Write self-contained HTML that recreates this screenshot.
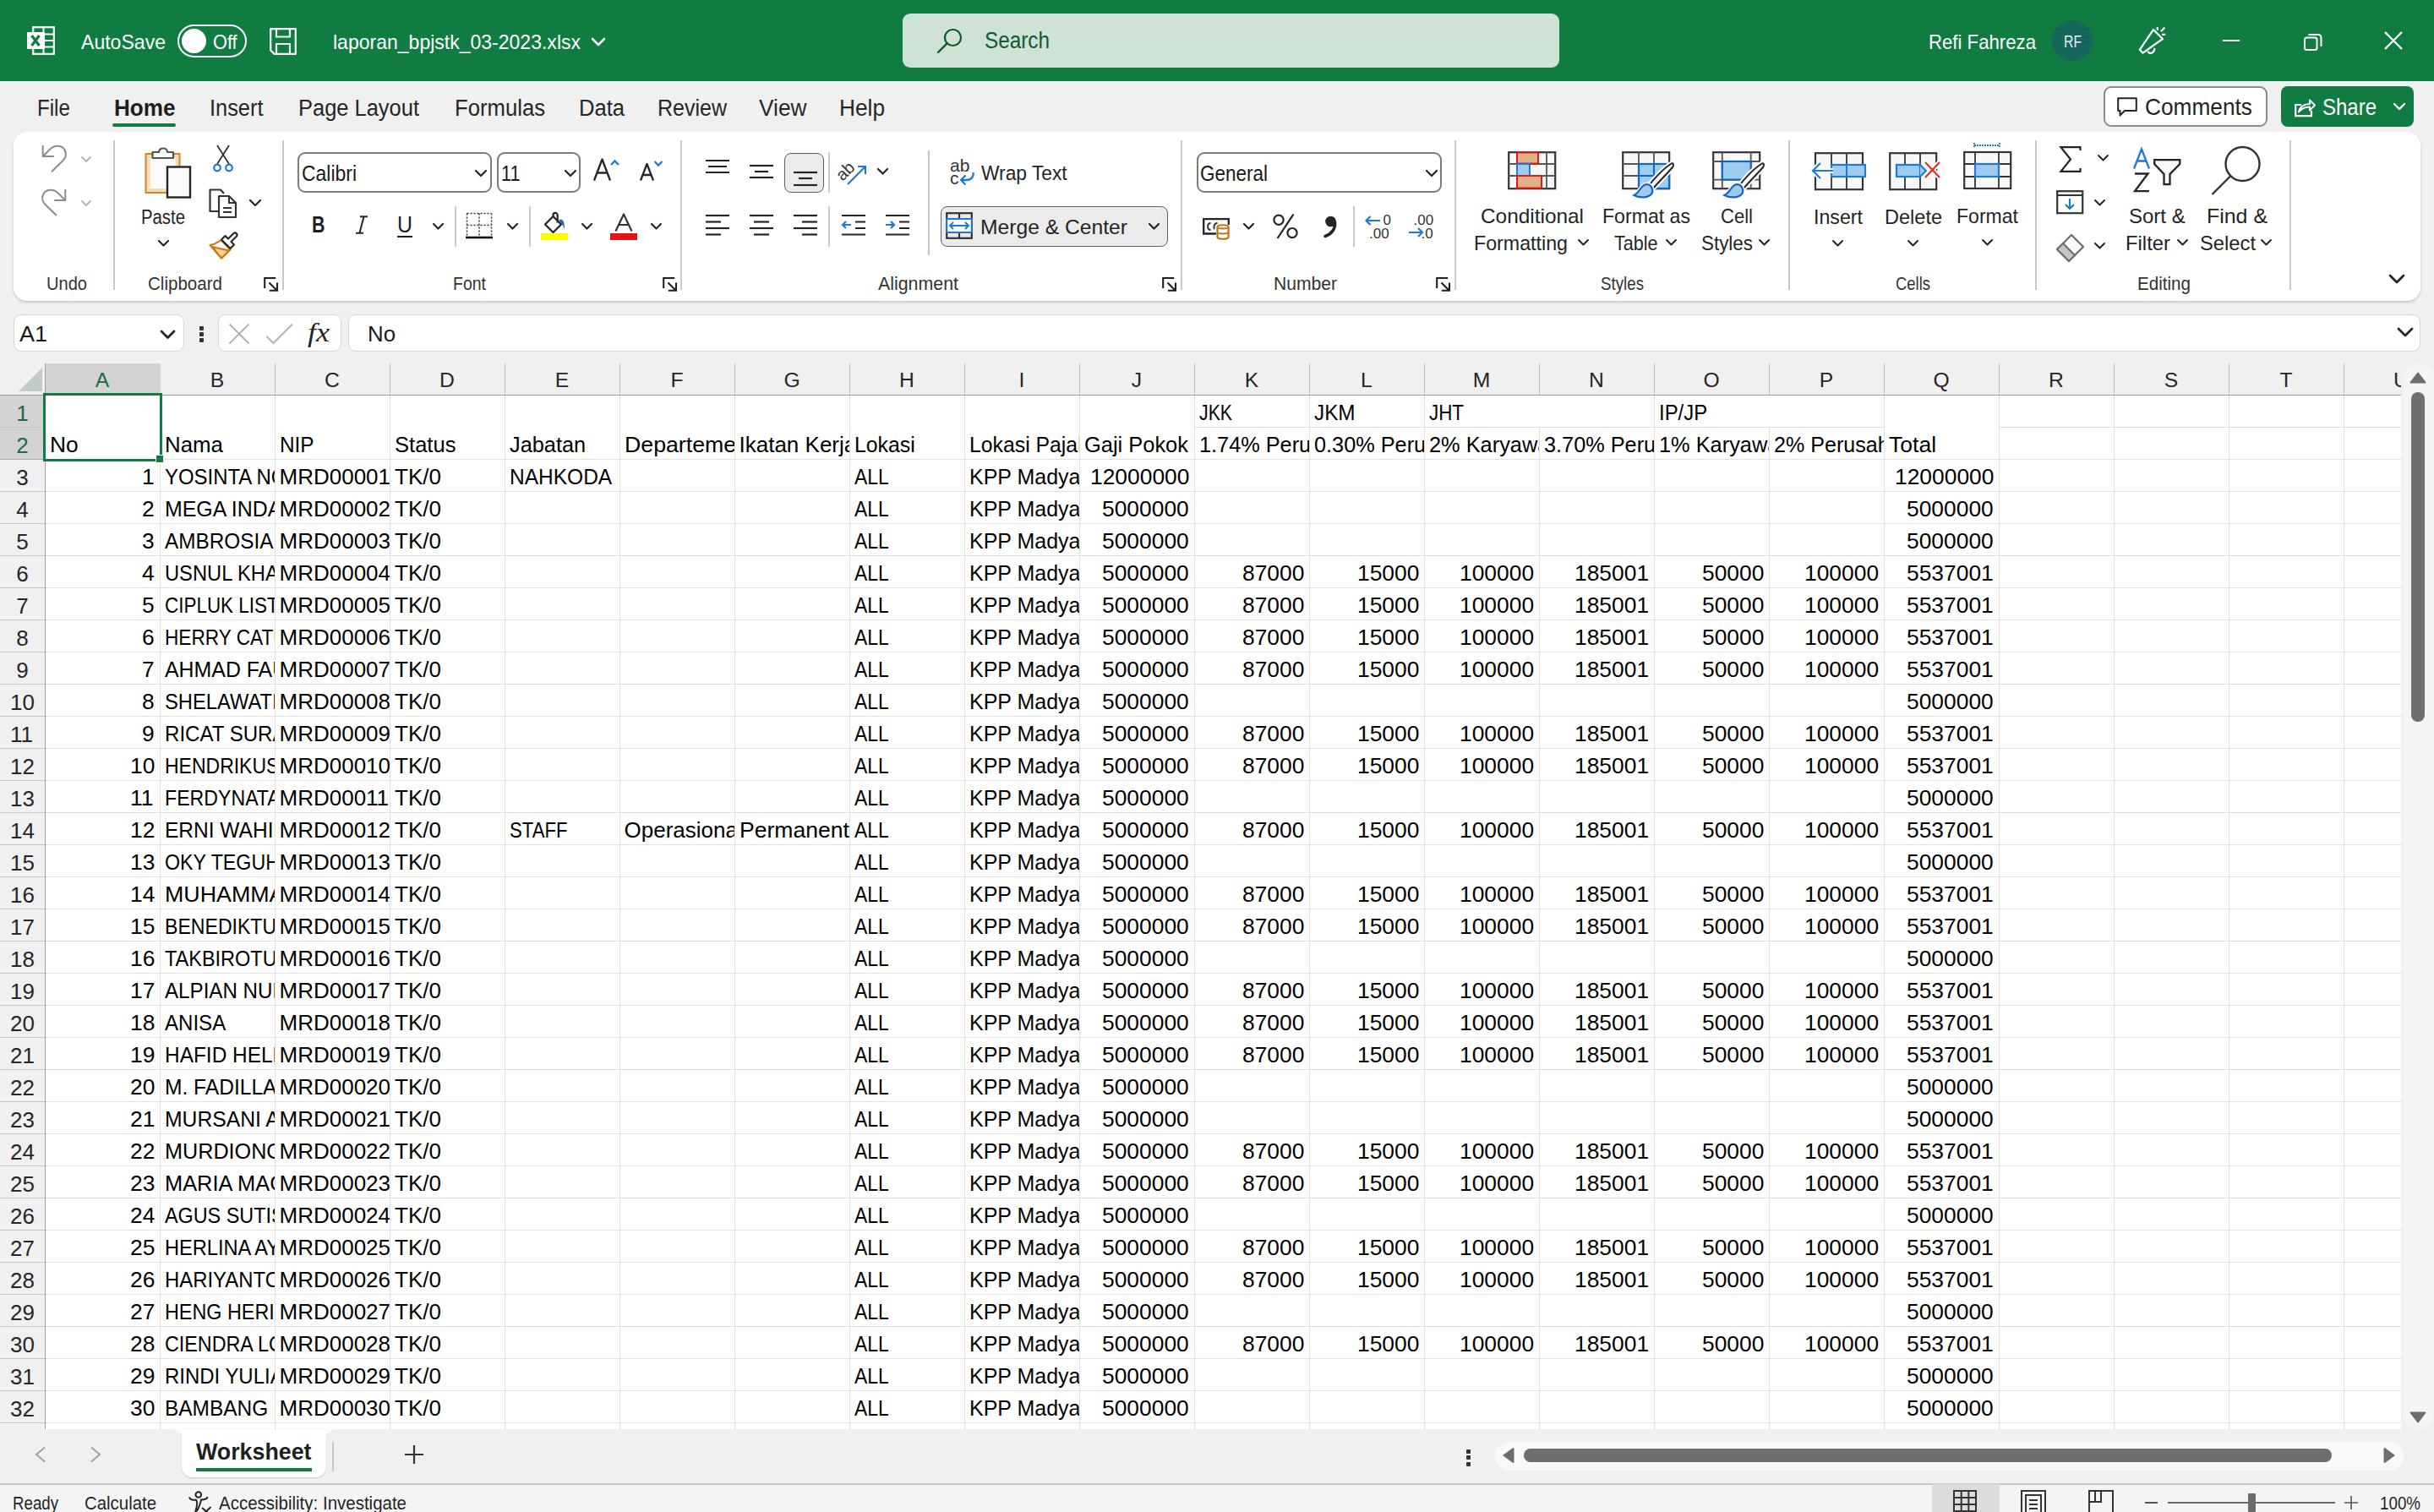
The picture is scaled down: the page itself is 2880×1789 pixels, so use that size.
<!DOCTYPE html><html><head><meta charset="utf-8"><style>
html,body{margin:0;padding:0}
body{width:2880px;height:1789px;overflow:hidden;position:relative;background:#f0f0f0;font-family:"Liberation Sans",sans-serif}
.t{position:absolute;white-space:nowrap;line-height:normal;transform-origin:0 0}
.r{position:absolute;box-sizing:border-box}
svg.r{overflow:visible}
</style></head><body>

<div class="r" style="left:0px;top:0px;width:2880px;height:96px;background:#107c41"></div>
<svg class="r" style="left:31px;top:31px;" width="34" height="34" viewBox="0 0 34 34" fill="none"><rect x="8.2" y="1.2" width="24.6" height="31.6" stroke="#fff" stroke-width="2.2"/>
<path d="M8 9.5H33M8 17H33M8 24.5H33M20.5 1V33" stroke="#fff" stroke-width="2"/>
<rect x="1" y="7" width="21" height="20" fill="#fff"/>
<path d="M6.5 11L15.5 23M15.5 11L6.5 23" stroke="#107c41" stroke-width="3.2"/></svg>
<div class="t" style="left:96.0px;top:35.9px;font-size:24px;color:#fff;transform:scaleX(0.9609);">AutoSave</div>
<div class="r" style="left:210px;top:29px;width:82px;height:39px;border:2.2px solid #fff;border-radius:20px"></div>
<div class="r" style="left:215px;top:34px;width:29px;height:29px;background:#fff;border-radius:50%"></div>
<div class="t" style="left:252.0px;top:35.9px;font-size:24px;color:#fff;transform:scaleX(0.9061);">Off</div>
<svg class="r" style="left:319px;top:33px;" width="32" height="32" viewBox="0 0 32 32" fill="none"><path d="M1.2 1.2H30.8V30.8H5.5L1.2 26.5Z" stroke="#fff" stroke-width="2.2" stroke-linejoin="round"/>
<path d="M8 1.5V10.5H24V1.5" stroke="#fff" stroke-width="2.2"/>
<path d="M8 30.5V19H24V30.5" stroke="#fff" stroke-width="2.2"/></svg>
<div class="t" style="left:394.0px;top:35.9px;font-size:24px;color:#fff;transform:scaleX(0.9590);">laporan_bpjstk_03-2023.xlsx</div>
<svg class="r" style="left:699.0px;top:43.5px;" width="18" height="11.0" viewBox="0 0 18 11.0" fill="none"><path d="M2 2 L9.0 9.0 L16 2" stroke="#fff" stroke-width="2.6" stroke-linecap="round" stroke-linejoin="round"/></svg>
<div class="r" style="left:1068px;top:16px;width:777px;height:64px;background:#cfe2d6;border-radius:9px"></div>
<svg class="r" style="left:1108px;top:32px;" width="32" height="32" viewBox="0 0 32 32" fill="none"><circle cx="19.5" cy="12.5" r="9.5" stroke="#0f5a30" stroke-width="2.2"/>
<path d="M12.8 19.2L2 30" stroke="#0f5a30" stroke-width="2.4" stroke-linecap="round"/></svg>
<div class="t" style="left:1165.0px;top:33.1px;font-size:27px;color:#0f5a30;transform:scaleX(0.9001);">Search</div>
<div class="t" style="left:2282.0px;top:35.9px;font-size:24px;color:#fff;transform:scaleX(0.9244);">Refi Fahreza</div>
<div class="r" style="left:2428px;top:24px;width:48px;height:48px;background:radial-gradient(circle at 2px 2px,#1d4c9c 0.9px,rgba(0,0,0,0) 1.3px) 0 0/4.5px 4.5px,#146c4c;border-radius:50%"></div>
<div class="t" style="left:2441.5px;top:37.6px;font-size:20px;color:#e8eef2;transform:scaleX(0.7877);">RF</div>
<svg class="r" style="left:2527px;top:30px;" width="38" height="36" viewBox="0 0 38 36" fill="none"><path d="M4.8 28.8L20.9 5.1L32 16L8.4 32.7Z" stroke="#fff" stroke-width="2.2" stroke-linejoin="round"/>
<path d="M14.5 30.5C15 34 21.5 34.5 22.5 27" stroke="#fff" stroke-width="2.2"/>
<path d="M25.8 2V5.8M29.8 7.2L34.4 2.6M31 10.9H35.2" stroke="#fff" stroke-width="2.2"/></svg>
<div class="r" style="left:2630px;top:47px;width:20px;height:2px;background:#fff"></div>
<svg class="r" style="left:2726px;top:39px;" width="22" height="21" viewBox="0 0 22 21" fill="none"><rect x="1" y="5.5" width="14.5" height="14.5" rx="2.5" stroke="#fff" stroke-width="2"/>
<path d="M5.5 2H17A3.5 3.5 0 0 1 20.5 5.5V16" stroke="#fff" stroke-width="2"/></svg>
<svg class="r" style="left:2821px;top:37px;" width="22" height="22" viewBox="0 0 22 22" fill="none"><path d="M1 1L21 21M21 1L1 21" stroke="#fff" stroke-width="2.2"/></svg>
<div class="t" style="left:43.6px;top:113.1px;font-size:27px;color:#262626;transform:scaleX(0.8918);">File</div>
<div class="t" style="left:134.5px;top:113.1px;font-size:27px;color:#1f1f1f;font-weight:700;transform:scaleX(0.9678);">Home</div>
<div class="t" style="left:247.5px;top:113.1px;font-size:27px;color:#262626;transform:scaleX(0.9404);">Insert</div>
<div class="t" style="left:353.0px;top:113.1px;font-size:27px;color:#262626;transform:scaleX(0.9431);">Page Layout</div>
<div class="t" style="left:538.0px;top:113.1px;font-size:27px;color:#262626;transform:scaleX(0.9509);">Formulas</div>
<div class="t" style="left:685.0px;top:113.1px;font-size:27px;color:#262626;transform:scaleX(0.9468);">Data</div>
<div class="t" style="left:778.0px;top:113.1px;font-size:27px;color:#262626;transform:scaleX(0.9263);">Review</div>
<div class="t" style="left:898.0px;top:113.1px;font-size:27px;color:#262626;transform:scaleX(0.9740);">View</div>
<div class="t" style="left:993.0px;top:113.1px;font-size:27px;color:#262626;transform:scaleX(0.9725);">Help</div>
<div class="r" style="left:133px;top:146px;width:75px;height:4px;background:#107c41;border-radius:2px"></div>
<div class="r" style="left:2489px;top:102px;width:194px;height:48px;border:2px solid #8a8a8a;border-radius:9px;background:#fff"></div>
<svg class="r" style="left:2505px;top:115px;" width="24" height="24" viewBox="0 0 24 24" fill="none"><path d="M1.2 1.2H22.8V16H9L3.5 21.5V16H1.2Z" stroke="#242424" stroke-width="2" stroke-linejoin="round"/></svg>
<div class="t" style="left:2538.0px;top:111.2px;font-size:28px;color:#242424;transform:scaleX(0.9382);">Comments</div>
<div class="r" style="left:2699px;top:102px;width:157px;height:48px;background:#107c41;border-radius:8px"></div>
<svg class="r" style="left:2714px;top:113px;" width="28" height="28" viewBox="0 0 28 28" fill="none"><path d="M9 11H2.2V24.2H21V18" stroke="#fff" stroke-width="2.2"/>
<path d="M6 19.5C7 13.5 12 10 19 10V5.5L25 11.5L19 17.5V13.5C13 13.5 9 15.5 6 19.5Z" stroke="#fff" stroke-width="2" stroke-linejoin="round"/></svg>
<div class="t" style="left:2748.0px;top:111.2px;font-size:28px;color:#fff;transform:scaleX(0.8566);">Share</div>
<svg class="r" style="left:2831.0px;top:121.0px;" width="16" height="10.0" viewBox="0 0 16 10.0" fill="none"><path d="M2 2 L8.0 8.0 L14 2" stroke="#fff" stroke-width="2.4" stroke-linecap="round" stroke-linejoin="round"/></svg>
<div class="r" style="left:16px;top:156px;width:2848px;height:200px;background:#fff;border-radius:16px;box-shadow:0 2px 3px rgba(0,0,0,0.17)"></div>
<div class="r" style="left:134px;top:166px;width:2px;height:177px;background:#c9c9c9"></div>
<div class="r" style="left:334px;top:166px;width:2px;height:177px;background:#c9c9c9"></div>
<div class="r" style="left:805px;top:166px;width:2px;height:177px;background:#c9c9c9"></div>
<div class="r" style="left:1397px;top:166px;width:2px;height:177px;background:#c9c9c9"></div>
<div class="r" style="left:1721px;top:166px;width:2px;height:177px;background:#c9c9c9"></div>
<div class="r" style="left:2116px;top:166px;width:2px;height:177px;background:#c9c9c9"></div>
<div class="r" style="left:2408px;top:166px;width:2px;height:177px;background:#c9c9c9"></div>
<div class="r" style="left:2709px;top:166px;width:2px;height:177px;background:#c9c9c9"></div>
<div class="r" style="left:538px;top:244px;width:2px;height:48px;background:#c9c9c9"></div>
<div class="r" style="left:626px;top:244px;width:2px;height:48px;background:#c9c9c9"></div>
<div class="r" style="left:980px;top:180px;width:2px;height:48px;background:#c9c9c9"></div>
<div class="r" style="left:980px;top:244px;width:2px;height:48px;background:#c9c9c9"></div>
<div class="r" style="left:1601px;top:244px;width:2px;height:48px;background:#c9c9c9"></div>
<div class="r" style="left:1098px;top:178px;width:2px;height:124px;background:#c9c9c9"></div>
<div class="t" style="left:55.0px;top:324.2px;font-size:21.5px;color:#333;transform:scaleX(0.9339);">Undo</div>
<div class="t" style="left:175.0px;top:324.2px;font-size:21.5px;color:#333;transform:scaleX(0.9563);">Clipboard</div>
<div class="t" style="left:536.0px;top:324.2px;font-size:21.5px;color:#333;transform:scaleX(0.9065);">Font</div>
<div class="t" style="left:1039.0px;top:324.2px;font-size:21.5px;color:#333;transform:scaleX(0.9937);">Alignment</div>
<div class="t" style="left:1507.0px;top:324.2px;font-size:21.5px;color:#333;transform:scaleX(0.9808);">Number</div>
<div class="t" style="left:1894.0px;top:324.2px;font-size:21.5px;color:#333;transform:scaleX(0.8711);">Styles</div>
<div class="t" style="left:2243.0px;top:324.2px;font-size:21.5px;color:#333;transform:scaleX(0.8580);">Cells</div>
<div class="t" style="left:2529.0px;top:324.2px;font-size:21.5px;color:#333;transform:scaleX(0.9583);">Editing</div>
<svg class="r" style="left:312px;top:327px;" width="18" height="18" viewBox="0 0 18 18" fill="none"><path d="M1.2 14V2H14.2M6.5 7.5L15.5 16.5M16 7.5V16.8H6.8" stroke="#1f1f1f" stroke-width="2.1"/></svg>
<svg class="r" style="left:784px;top:327px;" width="18" height="18" viewBox="0 0 18 18" fill="none"><path d="M1.2 14V2H14.2M6.5 7.5L15.5 16.5M16 7.5V16.8H6.8" stroke="#1f1f1f" stroke-width="2.1"/></svg>
<svg class="r" style="left:1375px;top:327px;" width="18" height="18" viewBox="0 0 18 18" fill="none"><path d="M1.2 14V2H14.2M6.5 7.5L15.5 16.5M16 7.5V16.8H6.8" stroke="#1f1f1f" stroke-width="2.1"/></svg>
<svg class="r" style="left:1699px;top:327px;" width="18" height="18" viewBox="0 0 18 18" fill="none"><path d="M1.2 14V2H14.2M6.5 7.5L15.5 16.5M16 7.5V16.8H6.8" stroke="#1f1f1f" stroke-width="2.1"/></svg>
<svg class="r" style="left:48px;top:171px;" width="32" height="34" viewBox="0 0 32 34" fill="none"><path d="M2.7 1V14.1H15.8" stroke="#8c8c8c" stroke-width="2"/><path d="M3.5 13.3L11 5.8C17 0 26 0.5 29 7.5C31 12 29 16.5 26 19.5L13 32.3" stroke="#8c8c8c" stroke-width="2"/></svg>
<svg class="r" style="left:48px;top:223px;" width="32" height="34" viewBox="0 0 32 34" fill="none"><path d="M29.3 1V14.1H16.2" stroke="#8c8c8c" stroke-width="2"/><path d="M28.5 13.3L21 5.8C15 0 6 0.5 3 7.5C1 12 3 16.5 6 19.5L19 32" stroke="#8c8c8c" stroke-width="2"/></svg>
<svg class="r" style="left:95.0px;top:183.5px;" width="14" height="9.0" viewBox="0 0 14 9.0" fill="none"><path d="M2 2 L7.0 7.0 L12 2" stroke="#b4b4b4" stroke-width="2" stroke-linecap="round" stroke-linejoin="round"/></svg>
<svg class="r" style="left:95.0px;top:235.5px;" width="14" height="9.0" viewBox="0 0 14 9.0" fill="none"><path d="M2 2 L7.0 7.0 L12 2" stroke="#b4b4b4" stroke-width="2" stroke-linecap="round" stroke-linejoin="round"/></svg>
<svg class="r" style="left:171px;top:173px;" width="56" height="63" viewBox="0 0 56 63" fill="none"><rect x="1.5" y="9" width="40" height="46" fill="#f6dcb5" stroke="#d9822b" stroke-width="2"/>
<rect x="6.5" y="14" width="30" height="36" fill="#fbfbfb"/>
<path d="M9.5 14V7H17C17 1 27 1 27 7H34V14Z" fill="#fbfbfb" stroke="#555" stroke-width="2.2" stroke-linejoin="round"/>
<rect x="27" y="24.5" width="27" height="36" fill="#fbfbfb" stroke="#242424" stroke-width="2.4"/></svg>
<div class="t" style="left:167.0px;top:244.0px;font-size:23.3px;color:#242424;transform:scaleX(0.8728);">Paste</div>
<svg class="r" style="left:185.5px;top:283.25px;" width="15" height="9.5" viewBox="0 0 15 9.5" fill="none"><path d="M2 2 L7.5 7.5 L13 2" stroke="#242424" stroke-width="2.2" stroke-linecap="round" stroke-linejoin="round"/></svg>
<svg class="r" style="left:252px;top:171px;" width="24" height="34" viewBox="0 0 24 34" fill="none"><path d="M5 23L19 1M19 23L5 1" stroke="#333" stroke-width="1.8"/>
<circle cx="5" cy="27.5" r="3.8" stroke="#1f7ad2" stroke-width="2.2" fill="#fff"/><circle cx="19" cy="27.5" r="3.8" stroke="#1f7ad2" stroke-width="2.2" fill="#fff"/></svg>
<svg class="r" style="left:247px;top:223px;" width="36" height="36" viewBox="0 0 36 36" fill="none"><path d="M12 27H1.5V1.5H14L18 6" stroke="#333" stroke-width="2.2" stroke-linejoin="round"/>
<path d="M12 9H24L32 17V34H12Z" fill="#fff" stroke="#333" stroke-width="2.2" stroke-linejoin="round"/>
<path d="M24 9V17H32M17 23H27M17 28H27" stroke="#333" stroke-width="2"/></svg>
<svg class="r" style="left:294.0px;top:235.0px;" width="16" height="10.0" viewBox="0 0 16 10.0" fill="none"><path d="M2 2 L8.0 8.0 L14 2" stroke="#242424" stroke-width="2.2" stroke-linecap="round" stroke-linejoin="round"/></svg>
<svg class="r" style="left:247px;top:275px;" width="36" height="34" viewBox="0 0 36 34" fill="none"><path d="M14.5 9C10 13 6 14 1.5 15L15 30.5L25.5 20.5Z" fill="#fafafa" stroke="#d0740c" stroke-width="2" stroke-linejoin="round"/>
<path d="M4 17L15 30.5L24 21.5Z" fill="#fdd39a" stroke="#d0740c" stroke-width="2" stroke-linejoin="round"/>
<path d="M15 8.5L19.5 4L23 7.5L29.5 1A2.5 2.5 0 0 1 33 4.5L26.5 11L30 14.5L25.5 19Z" fill="#fafafa" stroke="#242424" stroke-width="2.1" stroke-linejoin="round"/></svg>
<div class="r" style="left:352px;top:180px;width:230px;height:48px;border:2px solid #7c7c7c;border-radius:9px"></div>
<div class="t" style="left:357.0px;top:191.1px;font-size:25.5px;color:#1a1a1a;transform:scaleX(0.8994);">Calibri</div>
<svg class="r" style="left:561.0px;top:200.0px;" width="16" height="10.0" viewBox="0 0 16 10.0" fill="none"><path d="M2 2 L8.0 8.0 L14 2" stroke="#242424" stroke-width="2.2" stroke-linecap="round" stroke-linejoin="round"/></svg>
<div class="r" style="left:588px;top:180px;width:99px;height:48px;border:2px solid #7c7c7c;border-radius:9px"></div>
<div class="t" style="left:593.0px;top:191.1px;font-size:25.5px;color:#1a1a1a;transform:scaleX(0.8461);">11</div>
<svg class="r" style="left:667.0px;top:200.0px;" width="16" height="10.0" viewBox="0 0 16 10.0" fill="none"><path d="M2 2 L8.0 8.0 L14 2" stroke="#242424" stroke-width="2.2" stroke-linecap="round" stroke-linejoin="round"/></svg>
<svg class="r" style="left:700px;top:186px;" width="34" height="30" viewBox="0 0 34 30" fill="none"><path d="M3 27.5L12.5 2.5L22 27.5M6.8 18.5H18.2" stroke="#242424" stroke-width="2.3" stroke-linejoin="round"/><path d="M23 9L27.5 4.5L32 9" stroke="#1f7ad2" stroke-width="2.3"/></svg>
<svg class="r" style="left:755px;top:186px;" width="32" height="30" viewBox="0 0 32 30" fill="none"><path d="M3 27.5L10.5 8L18 27.5M5.8 21H15.2" stroke="#242424" stroke-width="2.3" stroke-linejoin="round"/><path d="M19.5 5L24 9.5L28.5 5" stroke="#1f7ad2" stroke-width="2.3"/></svg>
<div class="t" style="left:369.0px;top:251.1px;font-size:27px;color:#1f1f1f;font-weight:700;transform:scaleX(0.7949);">B</div>
<svg class="r" style="left:419px;top:255px;" width="18" height="22" viewBox="0 0 18 22" fill="none"><path d="M11.5 1.5L6.5 20.5M7 1.2H16M2 20.8H11" stroke="#242424" stroke-width="2"/></svg>
<div class="t" style="left:470.0px;top:251.1px;font-size:27px;color:#1f1f1f;transform:scaleX(0.9231);">U</div>
<div class="r" style="left:470px;top:279px;width:18px;height:2px;background:#1f1f1f"></div>
<svg class="r" style="left:510.5px;top:263.25px;" width="15" height="9.5" viewBox="0 0 15 9.5" fill="none"><path d="M2 2 L7.5 7.5 L13 2" stroke="#242424" stroke-width="2.2" stroke-linecap="round" stroke-linejoin="round"/></svg>
<svg class="r" style="left:551px;top:251px;" width="32" height="32" viewBox="0 0 32 32" fill="none"><path d="M1.5 1.5H30.5M1.5 15.5H30.5M1.5 1.5V29M30.5 1.5V29M16 1.5V29" stroke="#333" stroke-width="1.5" stroke-dasharray="2 2"/><path d="M0 30H32" stroke="#111" stroke-width="2.6"/></svg>
<svg class="r" style="left:598.5px;top:263.25px;" width="15" height="9.5" viewBox="0 0 15 9.5" fill="none"><path d="M2 2 L7.5 7.5 L13 2" stroke="#242424" stroke-width="2.2" stroke-linecap="round" stroke-linejoin="round"/></svg>
<svg class="r" style="left:640px;top:250px;" width="34" height="36" viewBox="0 0 34 36" fill="none"><path d="M5 15.5L14.5 6L24 15.5L14.5 25Z" fill="#fafafa" stroke="#242424" stroke-width="2.2" stroke-linejoin="round"/><path d="M14.5 6V4.5A2.6 2.6 0 0 1 19.7 4.5V13.5" stroke="#242424" stroke-width="2.2"/>
<path d="M21.5 10C25 8 28.5 11 27.8 21.5C26.5 17 25 14.5 22.5 13.5Z" fill="#1f6fc0"/>
<rect x="0" y="26" width="32" height="8" fill="#ffff00"/></svg>
<svg class="r" style="left:686.5px;top:263.25px;" width="15" height="9.5" viewBox="0 0 15 9.5" fill="none"><path d="M2 2 L7.5 7.5 L13 2" stroke="#242424" stroke-width="2.2" stroke-linecap="round" stroke-linejoin="round"/></svg>
<svg class="r" style="left:727px;top:252px;" width="22" height="22" viewBox="0 0 22 22" fill="none"><path d="M1.5 21.5L11 1.5L20.5 21.5M5.5 14H16.5" stroke="#333" stroke-width="2.2" stroke-linejoin="round"/></svg>
<div class="r" style="left:722px;top:276px;width:32px;height:8px;background:#e81313"></div>
<svg class="r" style="left:768.5px;top:263.25px;" width="15" height="9.5" viewBox="0 0 15 9.5" fill="none"><path d="M2 2 L7.5 7.5 L13 2" stroke="#242424" stroke-width="2.2" stroke-linecap="round" stroke-linejoin="round"/></svg>
<div class="r" style="left:928px;top:181px;width:47px;height:47px;background:#ebebeb;border:1.8px solid #5f5f5f;border-radius:8px"></div>
<svg class="r" style="left:834px;top:188px;" width="30" height="20" viewBox="0 0 30 20" fill="none"><path d="M1 2H29M4 9H26M1 16H29" stroke="#242424" stroke-width="2.2"/></svg>
<svg class="r" style="left:886px;top:194px;" width="30" height="20" viewBox="0 0 30 20" fill="none"><path d="M1 2H29" stroke="#242424" stroke-width="2.2"/><path d="M7 9H23" stroke="#242424" stroke-width="2.2"/><path d="M1 16H29" stroke="#242424" stroke-width="2.2"/></svg>
<svg class="r" style="left:938px;top:202px;" width="30" height="20" viewBox="0 0 30 20" fill="none"><path d="M1 2H29" stroke="#242424" stroke-width="2.2"/><path d="M7 9H23" stroke="#242424" stroke-width="2.2"/><path d="M1 17H29" stroke="#242424" stroke-width="2.2"/></svg>
<svg class="r" style="left:992px;top:186px;" width="36" height="34" viewBox="0 0 36 34" fill="none"><text x="0" y="0" transform="translate(5 29) rotate(-45)" font-family="Liberation Sans" font-size="20" fill="#333">ab</text>
<path d="M11 32L31 12M23 11H32V20" stroke="#1f7ad2" stroke-width="2.2"/></svg>
<svg class="r" style="left:1036.5px;top:198.25px;" width="15" height="9.5" viewBox="0 0 15 9.5" fill="none"><path d="M2 2 L7.5 7.5 L13 2" stroke="#242424" stroke-width="2.2" stroke-linecap="round" stroke-linejoin="round"/></svg>
<svg class="r" style="left:834px;top:253px;" width="30" height="28" viewBox="0 0 30 28" fill="none"><path d="M1 2.0H29" stroke="#242424" stroke-width="2.2"/><path d="M1 9.5H19" stroke="#242424" stroke-width="2.2"/><path d="M1 17.0H29" stroke="#242424" stroke-width="2.2"/><path d="M1 24.5H19" stroke="#242424" stroke-width="2.2"/></svg>
<svg class="r" style="left:886px;top:253px;" width="30" height="28" viewBox="0 0 30 28" fill="none"><path d="M1 2.0H29" stroke="#242424" stroke-width="2.2"/><path d="M6 9.5H24" stroke="#242424" stroke-width="2.2"/><path d="M1 17.0H29" stroke="#242424" stroke-width="2.2"/><path d="M6 24.5H24" stroke="#242424" stroke-width="2.2"/></svg>
<svg class="r" style="left:938px;top:253px;" width="30" height="28" viewBox="0 0 30 28" fill="none"><path d="M1 2.0H29" stroke="#242424" stroke-width="2.2"/><path d="M11 9.5H29" stroke="#242424" stroke-width="2.2"/><path d="M1 17.0H29" stroke="#242424" stroke-width="2.2"/><path d="M11 24.5H29" stroke="#242424" stroke-width="2.2"/></svg>
<svg class="r" style="left:995px;top:253px;" width="30" height="28" viewBox="0 0 30 28" fill="none"><path d="M1 2H29M17 9.5H29M17 17H29M1 24.5H29" stroke="#242424" stroke-width="2.2"/><path d="M12 13H2M6 9L2 13L6 17" stroke="#1f7ad2" stroke-width="2.2"/></svg>
<svg class="r" style="left:1047px;top:253px;" width="30" height="28" viewBox="0 0 30 28" fill="none"><path d="M1 2H29M17 9.5H29M17 17H29M1 24.5H29" stroke="#242424" stroke-width="2.2"/><path d="M1 13H11M7 9L11 13L7 17" stroke="#1f7ad2" stroke-width="2.2"/></svg>
<svg class="r" style="left:1122px;top:186px;" width="34" height="36" viewBox="0 0 34 36" fill="none"><text x="2" y="17.4" font-family="Liberation Sans" font-size="21" fill="#333">ab</text>
<text x="2" y="32" font-family="Liberation Sans" font-size="21" fill="#333">c</text>
<path d="M29.5 18C30.5 23 27 27 21.5 27H15M20.5 21.5L15 27L20.5 32.5" stroke="#1f7ad2" stroke-width="2.3" stroke-linejoin="round"/></svg>
<div class="t" style="left:1160.5px;top:191.4px;font-size:24.5px;color:#242424;transform:scaleX(0.9293);">Wrap Text</div>
<div class="r" style="left:1113px;top:244px;width:269px;height:48px;background:#ebebeb;border:1.8px solid #5f5f5f;border-radius:8px"></div>
<svg class="r" style="left:1119px;top:251px;" width="32" height="32" viewBox="0 0 32 32" fill="none"><rect x="1.2" y="1.2" width="29.6" height="29.6" stroke="#333" stroke-width="2.2"/>
<path d="M16 1V31" stroke="#333" stroke-width="2.2"/>
<rect x="1.2" y="8" width="29.6" height="16" fill="#fff" stroke="#1f7ad2" stroke-width="2"/>
<path d="M5 16H27M9 12L5 16L9 20M23 12L27 16L23 20" stroke="#1f7ad2" stroke-width="2"/></svg>
<div class="t" style="left:1160.0px;top:255.4px;font-size:24.5px;color:#242424;transform:scaleX(1.0062);">Merge &amp; Center</div>
<svg class="r" style="left:1357.5px;top:263.25px;" width="15" height="9.5" viewBox="0 0 15 9.5" fill="none"><path d="M2 2 L7.5 7.5 L13 2" stroke="#242424" stroke-width="2.2" stroke-linecap="round" stroke-linejoin="round"/></svg>
<div class="r" style="left:1416px;top:180px;width:290px;height:48px;border:2px solid #7c7c7c;border-radius:9px"></div>
<div class="t" style="left:1420.0px;top:191.1px;font-size:25.5px;color:#1a1a1a;transform:scaleX(0.8818);">General</div>
<svg class="r" style="left:1686.0px;top:200.0px;" width="16" height="10.0" viewBox="0 0 16 10.0" fill="none"><path d="M2 2 L8.0 8.0 L14 2" stroke="#242424" stroke-width="2.2" stroke-linecap="round" stroke-linejoin="round"/></svg>
<svg class="r" style="left:1422px;top:256px;" width="36" height="30" viewBox="0 0 36 30" fill="none"><path d="M17 20.5H2.2V3.2H31.8V10" stroke="#242424" stroke-width="2.3"/>
<path d="M10.5 8C6 8 6 16 10.5 16M18.5 8C14 8 14 14 15 15" stroke="#333" stroke-width="2"/>
<path d="M18.5 12.5C18.5 9.5 31.5 9.5 31.5 12.5V24.5C31.5 27.5 18.5 27.5 18.5 24.5Z" fill="#fff" stroke="#c8700f" stroke-width="2.2"/>
<path d="M18.5 12.5C18.5 15 31.5 15 31.5 12.5M18.5 18.5C18.5 21 31.5 21 31.5 18.5" stroke="#c8700f" stroke-width="2"/></svg>
<svg class="r" style="left:1469.5px;top:263.25px;" width="15" height="9.5" viewBox="0 0 15 9.5" fill="none"><path d="M2 2 L7.5 7.5 L13 2" stroke="#242424" stroke-width="2.2" stroke-linecap="round" stroke-linejoin="round"/></svg>
<svg class="r" style="left:1504px;top:252px;" width="34" height="32" viewBox="0 0 34 32" fill="none"><circle cx="9" cy="8.2" r="5.6" stroke="#242424" stroke-width="2.2"/><circle cx="25" cy="23.6" r="5.6" stroke="#242424" stroke-width="2.2"/><path d="M26.5 1.5L7.5 30" stroke="#242424" stroke-width="2.2"/></svg>
<svg class="r" style="left:1565px;top:254px;" width="18" height="28" viewBox="0 0 18 28" fill="none"><circle cx="9.5" cy="8" r="6.3" fill="#242424"/><path d="M14.5 9C15.5 17 10 23 3 25.5" stroke="#242424" stroke-width="3.6" stroke-linecap="round"/></svg>
<svg class="r" style="left:1614px;top:251px;" width="34" height="34" viewBox="0 0 34 34" fill="none"><text x="22.5" y="14.5" font-family="Liberation Sans" font-size="17" fill="#333">0</text>
<text x="6" y="31" font-family="Liberation Sans" font-size="17" fill="#333">.00</text>
<path d="M19 10H2.5M7.5 5L2.5 10L7.5 15" stroke="#1f7ad2" stroke-width="2.2"/></svg>
<svg class="r" style="left:1666px;top:251px;" width="34" height="34" viewBox="0 0 34 34" fill="none"><text x="6.5" y="14.5" font-family="Liberation Sans" font-size="17" fill="#333">.00</text>
<text x="15.5" y="31" font-family="Liberation Sans" font-size="17" fill="#333">.0</text>
<path d="M1 24H17M12 19L17 24L12 29" stroke="#1f7ad2" stroke-width="2.2"/></svg>
<svg class="r" style="left:1784px;top:179px;" width="58" height="46" viewBox="0 0 58 46" fill="none"><rect x="1.2" y="1.2" width="55" height="43" fill="#f8f8f8" stroke="#333" stroke-width="2.2"/>
<path d="M11 1V44M46 1V44M1 15H56M1 29H56" stroke="#555" stroke-width="1.8"/>
<rect x="11" y="1.5" width="25" height="13" fill="#e3b186" stroke="#e01919" stroke-width="2"/>
<rect x="11" y="15" width="15" height="14" fill="#9ecbf0" stroke="#1f7ad2" stroke-width="2"/>
<rect x="11" y="29" width="29" height="14.5" fill="#e3b186" stroke="#e01919" stroke-width="2"/></svg>
<div class="t" style="left:1752.0px;top:241.9px;font-size:24px;color:#242424;transform:scaleX(1.0160);">Conditional</div>
<div class="t" style="left:1744.0px;top:273.9px;font-size:24px;color:#242424;transform:scaleX(0.9677);">Formatting</div>
<svg class="r" style="left:1865.5px;top:282.25px;" width="15" height="9.5" viewBox="0 0 15 9.5" fill="none"><path d="M2 2 L7.5 7.5 L13 2" stroke="#242424" stroke-width="2" stroke-linecap="round" stroke-linejoin="round"/></svg>
<svg class="r" style="left:1919px;top:179px;" width="64" height="56" viewBox="0 0 64 56" fill="none"><rect x="1.2" y="1.2" width="55" height="43" fill="#f8f8f8" stroke="#333" stroke-width="2.2"/>
<path d="M20 1V44M38 1V44M1 15H56M1 29H56" stroke="#555" stroke-width="1.8"/>
<rect x="20" y="15" width="36" height="29" fill="#9ecbf0" stroke="#1565c0" stroke-width="2.2"/>
<path d="M38 15V44M20 29H56" stroke="#1565c0" stroke-width="2"/>
<path d="M31 42C38 32 50 20 58 15C61 13 62 16 60 19C53 27 43 37 36 45Z" fill="#fff" stroke="#fff" stroke-width="6" stroke-linejoin="round"/>
<path d="M31 42C38 32 50 20 58 15C61 13 62 16 60 19C53 27 43 37 36 45Z" fill="#fafafa" stroke="#242424" stroke-width="2" stroke-linejoin="round"/>
<path d="M35.5 43.5C34 38.5 28 38 25 41C21 45 19 50 14.5 52C21 55.5 31 55.5 35 50.5C36.5 48.5 36.5 45.5 35.5 43.5Z" fill="#fff" stroke="#fff" stroke-width="5"/>
<path d="M35.5 43.5C34 38.5 28 38 25 41C21 45 19 50 14.5 52C21 55.5 31 55.5 35 50.5C36.5 48.5 36.5 45.5 35.5 43.5Z" fill="#9ecbf0" stroke="#1565c0" stroke-width="2.2"/></svg>
<div class="t" style="left:1896.0px;top:241.9px;font-size:24px;color:#242424;transform:scaleX(0.9628);">Format as</div>
<div class="t" style="left:1910.0px;top:273.9px;font-size:24px;color:#242424;transform:scaleX(0.8995);">Table</div>
<svg class="r" style="left:1969.5px;top:282.25px;" width="15" height="9.5" viewBox="0 0 15 9.5" fill="none"><path d="M2 2 L7.5 7.5 L13 2" stroke="#242424" stroke-width="2" stroke-linecap="round" stroke-linejoin="round"/></svg>
<svg class="r" style="left:2026px;top:179px;" width="64" height="56" viewBox="0 0 64 56" fill="none"><rect x="1.2" y="1.2" width="55" height="43" fill="#f8f8f8" stroke="#333" stroke-width="2.2"/>
<path d="M11.8 1V44M45.7 1V44M1 12H56M1 33.6H56" stroke="#555" stroke-width="1.8"/>
<rect x="11.8" y="12" width="33.9" height="21.6" fill="#9ecbf0" stroke="#1565c0" stroke-width="2.2"/>
<path d="M31 42C38 32 50 20 58 15C61 13 62 16 60 19C53 27 43 37 36 45Z" fill="#fff" stroke="#fff" stroke-width="6" stroke-linejoin="round"/>
<path d="M31 42C38 32 50 20 58 15C61 13 62 16 60 19C53 27 43 37 36 45Z" fill="#fafafa" stroke="#242424" stroke-width="2" stroke-linejoin="round"/>
<path d="M35.5 43.5C34 38.5 28 38 25 41C21 45 19 50 14.5 52C21 55.5 31 55.5 35 50.5C36.5 48.5 36.5 45.5 35.5 43.5Z" fill="#fff" stroke="#fff" stroke-width="5"/>
<path d="M35.5 43.5C34 38.5 28 38 25 41C21 45 19 50 14.5 52C21 55.5 31 55.5 35 50.5C36.5 48.5 36.5 45.5 35.5 43.5Z" fill="#9ecbf0" stroke="#1565c0" stroke-width="2.2"/></svg>
<div class="t" style="left:2036.0px;top:241.9px;font-size:24px;color:#242424;transform:scaleX(0.9191);">Cell</div>
<div class="t" style="left:2013.0px;top:273.9px;font-size:24px;color:#242424;transform:scaleX(0.9334);">Styles</div>
<svg class="r" style="left:2079.5px;top:282.25px;" width="15" height="9.5" viewBox="0 0 15 9.5" fill="none"><path d="M2 2 L7.5 7.5 L13 2" stroke="#242424" stroke-width="2" stroke-linecap="round" stroke-linejoin="round"/></svg>
<svg class="r" style="left:2143px;top:180px;" width="66" height="46" viewBox="0 0 66 46" fill="none"><rect x="5" y="1.2" width="56" height="43" fill="#f8f8f8" stroke="#333" stroke-width="2.2"/>
<path d="M24 1V44M42 1V44" stroke="#333" stroke-width="1.8"/>
<rect x="24" y="15" width="40" height="14" fill="#9ecbf0" stroke="#1f7ad2" stroke-width="2.2"/>
<path d="M42 15V29" stroke="#1f7ad2" stroke-width="2"/>
<path d="M26 22H3M11 13L2 22L11 31" stroke="#fff" stroke-width="6"/>
<path d="M26 22H3M11 13L2 22L11 31" stroke="#1f7ad2" stroke-width="2.2"/></svg>
<div class="t" style="left:2146.0px;top:243.4px;font-size:24px;color:#242424;transform:scaleX(0.9663);">Insert</div>
<svg class="r" style="left:2166.5px;top:283.25px;" width="15" height="9.5" viewBox="0 0 15 9.5" fill="none"><path d="M2 2 L7.5 7.5 L13 2" stroke="#242424" stroke-width="2" stroke-linecap="round" stroke-linejoin="round"/></svg>
<svg class="r" style="left:2235px;top:180px;" width="62" height="46" viewBox="0 0 62 46" fill="none"><rect x="1.2" y="1.2" width="55" height="43" fill="#f8f8f8" stroke="#333" stroke-width="2.2"/>
<path d="M19 1V44M37 1V44" stroke="#333" stroke-width="1.8"/>
<rect x="9" y="15" width="28" height="14" fill="#9ecbf0" stroke="#1f7ad2" stroke-width="2.2"/>
<path d="M37 15L44 22L37 29" fill="#9ecbf0" stroke="#1f7ad2" stroke-width="2"/>
<path d="M43 12L60 30M60 12L43 30" stroke="#fff" stroke-width="6"/>
<path d="M43 12L60 30M60 12L43 30" stroke="#e0331b" stroke-width="2.2"/></svg>
<div class="t" style="left:2230.0px;top:243.4px;font-size:24px;color:#242424;transform:scaleX(0.9802);">Delete</div>
<svg class="r" style="left:2255.5px;top:283.25px;" width="15" height="9.5" viewBox="0 0 15 9.5" fill="none"><path d="M2 2 L7.5 7.5 L13 2" stroke="#242424" stroke-width="2" stroke-linecap="round" stroke-linejoin="round"/></svg>
<svg class="r" style="left:2323px;top:169px;" width="58" height="56" viewBox="0 0 58 56" fill="none"><rect x="1.2" y="11" width="55" height="43" fill="#f8f8f8" stroke="#333" stroke-width="2.2"/>
<path d="M14 11V54M42 11V54M1 25H56M1 40H56" stroke="#333" stroke-width="1.8"/>
<rect x="14" y="25" width="28" height="15" fill="#9ecbf0" stroke="#1f7ad2" stroke-width="2.2"/>
<path d="M13 3H43M13 0V6M43 0V6" stroke="#1f7ad2" stroke-width="1.8" stroke-dasharray="2 1"/></svg>
<div class="t" style="left:2315.0px;top:241.9px;font-size:24px;color:#242424;transform:scaleX(0.9604);">Format</div>
<svg class="r" style="left:2343.5px;top:282.25px;" width="15" height="9.5" viewBox="0 0 15 9.5" fill="none"><path d="M2 2 L7.5 7.5 L13 2" stroke="#242424" stroke-width="2" stroke-linecap="round" stroke-linejoin="round"/></svg>
<svg class="r" style="left:2437px;top:173px;" width="26" height="31" viewBox="0 0 26 31" fill="none"><path d="M24.5 5V1.2H1.5L13 15.5L1.5 29.8H24.5V26" stroke="#242424" stroke-width="2.2" stroke-linejoin="miter"/></svg>
<svg class="r" style="left:2480.5px;top:182.25px;" width="15" height="9.5" viewBox="0 0 15 9.5" fill="none"><path d="M2 2 L7.5 7.5 L13 2" stroke="#242424" stroke-width="2" stroke-linecap="round" stroke-linejoin="round"/></svg>
<svg class="r" style="left:2433px;top:225px;" width="34" height="30" viewBox="0 0 34 30" fill="none"><rect x="1.2" y="1.2" width="30" height="26" stroke="#333" stroke-width="2.2"/>
<path d="M1 6H31" stroke="#333" stroke-width="2"/>
<path d="M16 10V22M11 17L16 22L21 17" stroke="#1f7ad2" stroke-width="2.2"/></svg>
<svg class="r" style="left:2476.5px;top:235.25px;" width="15" height="9.5" viewBox="0 0 15 9.5" fill="none"><path d="M2 2 L7.5 7.5 L13 2" stroke="#242424" stroke-width="2" stroke-linecap="round" stroke-linejoin="round"/></svg>
<svg class="r" style="left:2432px;top:276px;" width="36" height="34" viewBox="0 0 36 34" fill="none"><path d="M2 19L19 2L33 16L16 33Z" fill="#fafafa" stroke="#6e6e6e" stroke-width="2.2" stroke-linejoin="round"/>
<path d="M2 19L9 12L23 26L16 33Z" fill="#c6c6c6" stroke="#6e6e6e" stroke-width="2.2" stroke-linejoin="round"/></svg>
<svg class="r" style="left:2476.5px;top:286.25px;" width="15" height="9.5" viewBox="0 0 15 9.5" fill="none"><path d="M2 2 L7.5 7.5 L13 2" stroke="#242424" stroke-width="2" stroke-linecap="round" stroke-linejoin="round"/></svg>
<svg class="r" style="left:2522px;top:174px;" width="60" height="56" viewBox="0 0 60 56" fill="none"><path d="M3 25.5L12 2.5L21 25.5M6.5 16.5H17.5" stroke="#1f7ad2" stroke-width="2.3"/>
<path d="M4 31.5H19.5L4 52.2H21" stroke="#242424" stroke-width="2.3"/>
<path d="M27.2 15.2H57.3V20L45.5 32V44.2H38.5V32L27.2 20Z" fill="#fafafa" stroke="#242424" stroke-width="2.3" stroke-linejoin="miter"/></svg>
<div class="t" style="left:2519.0px;top:241.9px;font-size:24px;color:#242424;">Sort &amp;</div>
<div class="t" style="left:2515.0px;top:273.9px;font-size:24px;color:#242424;transform:scaleX(0.9938);">Filter</div>
<svg class="r" style="left:2574.5px;top:282.25px;" width="15" height="9.5" viewBox="0 0 15 9.5" fill="none"><path d="M2 2 L7.5 7.5 L13 2" stroke="#242424" stroke-width="2" stroke-linecap="round" stroke-linejoin="round"/></svg>
<svg class="r" style="left:2616px;top:173px;" width="60" height="60" viewBox="0 0 60 60" fill="none"><circle cx="37.5" cy="21" r="20" stroke="#333" stroke-width="2.4"/>
<path d="M23.5 35L1.5 57" stroke="#333" stroke-width="2.4"/></svg>
<div class="t" style="left:2611.0px;top:241.9px;font-size:24px;color:#242424;transform:scaleX(1.0380);">Find &amp;</div>
<div class="t" style="left:2603.0px;top:273.9px;font-size:24px;color:#242424;transform:scaleX(0.9895);">Select</div>
<svg class="r" style="left:2673.5px;top:282.25px;" width="15" height="9.5" viewBox="0 0 15 9.5" fill="none"><path d="M2 2 L7.5 7.5 L13 2" stroke="#242424" stroke-width="2" stroke-linecap="round" stroke-linejoin="round"/></svg>
<svg class="r" style="left:2825.5px;top:324.0px;" width="20" height="12.0" viewBox="0 0 20 12.0" fill="none"><path d="M2 2 L10.0 10.0 L18 2" stroke="#242424" stroke-width="2.8" stroke-linecap="round" stroke-linejoin="round"/></svg>
<div class="r" style="left:16px;top:372px;width:202px;height:44px;background:#fff;border:1.5px solid #d6d6d6;border-radius:9px"></div>
<div class="t" style="left:23.0px;top:380.4px;font-size:26px;color:#1a1a1a;transform:scaleX(1.0377);">A1</div>
<svg class="r" style="left:189.0px;top:390.25px;" width="19" height="11.5" viewBox="0 0 19 11.5" fill="none"><path d="M2 2 L9.5 9.5 L17 2" stroke="#242424" stroke-width="2.8" stroke-linecap="round" stroke-linejoin="round"/></svg>
<div class="r" style="left:236px;top:385.5px;width:5px;height:5px;background:#333;border-radius:1px"></div>
<div class="r" style="left:236px;top:392.5px;width:5px;height:5px;background:#333;border-radius:1px"></div>
<div class="r" style="left:236px;top:399.5px;width:5px;height:5px;background:#333;border-radius:1px"></div>
<div class="r" style="left:258px;top:372px;width:146px;height:44px;background:#fff;border:1.5px solid #d6d6d6;border-radius:9px"></div>
<svg class="r" style="left:270px;top:382px;" width="26" height="26" viewBox="0 0 26 26" fill="none"><path d="M1.5 1.5L24.5 24.5M24.5 1.5L1.5 24.5" stroke="#b3b3b3" stroke-width="2"/></svg>
<svg class="r" style="left:314px;top:382px;" width="34" height="26" viewBox="0 0 34 26" fill="none"><path d="M1.5 16L9.5 24L32 1.5" stroke="#b3b3b3" stroke-width="2"/></svg>
<div class="t" style="left:364.0px;top:374.5px;font-size:32px;color:#242424;transform:scaleX(1.1249);font-family:'Liberation Serif';font-style:italic;">fx</div>
<div class="r" style="left:412px;top:372px;width:2452px;height:44px;background:#fff;border:1.5px solid #d6d6d6;border-radius:9px"></div>
<div class="t" style="left:435.0px;top:380.4px;font-size:26px;color:#1a1a1a;transform:scaleX(0.9929);">No</div>
<svg class="r" style="left:2836.0px;top:387.0px;" width="20" height="12.0" viewBox="0 0 20 12.0" fill="none"><path d="M2 2 L10.0 10.0 L18 2" stroke="#242424" stroke-width="2.8" stroke-linecap="round" stroke-linejoin="round"/></svg>
<div class="r" style="left:53px;top:430px;width:2788px;height:37px;background:#f0f0f0"></div>
<div class="r" style="left:53px;top:430px;width:137px;height:37px;background:#d3d3d3"></div>
<svg class="r" style="left:20px;top:434px;" width="32" height="30" viewBox="0 0 32 30" fill="none"><path d="M30 1V29H2Z" fill="#c3cbc6"/></svg>
<div class="t" style="left:112.8px;top:436.3px;font-size:24.7px;color:#1b6b45;">A</div>
<div class="t" style="left:248.8px;top:436.3px;font-size:24.7px;color:#262626;">B</div>
<div class="t" style="left:384.1px;top:436.3px;font-size:24.7px;color:#262626;">C</div>
<div class="t" style="left:520.1px;top:436.3px;font-size:24.7px;color:#262626;">D</div>
<div class="t" style="left:656.8px;top:436.3px;font-size:24.7px;color:#262626;">E</div>
<div class="t" style="left:793.5px;top:436.3px;font-size:24.7px;color:#262626;">F</div>
<div class="t" style="left:927.4px;top:436.3px;font-size:24.7px;color:#262626;">G</div>
<div class="t" style="left:1064.1px;top:436.3px;font-size:24.7px;color:#262626;">H</div>
<div class="t" style="left:1205.6px;top:436.3px;font-size:24.7px;color:#262626;">I</div>
<div class="t" style="left:1338.8px;top:436.3px;font-size:24.7px;color:#262626;">J</div>
<div class="t" style="left:1472.8px;top:436.3px;font-size:24.7px;color:#262626;">K</div>
<div class="t" style="left:1610.1px;top:436.3px;font-size:24.7px;color:#262626;">L</div>
<div class="t" style="left:1742.7px;top:436.3px;font-size:24.7px;color:#262626;">M</div>
<div class="t" style="left:1880.1px;top:436.3px;font-size:24.7px;color:#262626;">N</div>
<div class="t" style="left:2015.4px;top:436.3px;font-size:24.7px;color:#262626;">O</div>
<div class="t" style="left:2152.8px;top:436.3px;font-size:24.7px;color:#262626;">P</div>
<div class="t" style="left:2287.4px;top:436.3px;font-size:24.7px;color:#262626;">Q</div>
<div class="t" style="left:2424.1px;top:436.3px;font-size:24.7px;color:#262626;">R</div>
<div class="t" style="left:2560.8px;top:436.3px;font-size:24.7px;color:#262626;">S</div>
<div class="t" style="left:2697.5px;top:436.3px;font-size:24.7px;color:#262626;">T</div>
<div class="t" style="left:2832.1px;top:436.3px;font-size:24.7px;color:#262626;">U</div>
<div class="r" style="left:325px;top:430px;width:1px;height:37px;background:#c2c2c2"></div>
<div class="r" style="left:461px;top:430px;width:1px;height:37px;background:#c2c2c2"></div>
<div class="r" style="left:597px;top:430px;width:1px;height:37px;background:#c2c2c2"></div>
<div class="r" style="left:733px;top:430px;width:1px;height:37px;background:#c2c2c2"></div>
<div class="r" style="left:869px;top:430px;width:1px;height:37px;background:#c2c2c2"></div>
<div class="r" style="left:1005px;top:430px;width:1px;height:37px;background:#c2c2c2"></div>
<div class="r" style="left:1141px;top:430px;width:1px;height:37px;background:#c2c2c2"></div>
<div class="r" style="left:1277px;top:430px;width:1px;height:37px;background:#c2c2c2"></div>
<div class="r" style="left:1413px;top:430px;width:1px;height:37px;background:#c2c2c2"></div>
<div class="r" style="left:1549px;top:430px;width:1px;height:37px;background:#c2c2c2"></div>
<div class="r" style="left:1685px;top:430px;width:1px;height:37px;background:#c2c2c2"></div>
<div class="r" style="left:1821px;top:430px;width:1px;height:37px;background:#c2c2c2"></div>
<div class="r" style="left:1957px;top:430px;width:1px;height:37px;background:#c2c2c2"></div>
<div class="r" style="left:2093px;top:430px;width:1px;height:37px;background:#c2c2c2"></div>
<div class="r" style="left:2229px;top:430px;width:1px;height:37px;background:#c2c2c2"></div>
<div class="r" style="left:2365px;top:430px;width:1px;height:37px;background:#c2c2c2"></div>
<div class="r" style="left:2501px;top:430px;width:1px;height:37px;background:#c2c2c2"></div>
<div class="r" style="left:2637px;top:430px;width:1px;height:37px;background:#c2c2c2"></div>
<div class="r" style="left:2773px;top:430px;width:1px;height:37px;background:#c2c2c2"></div>
<div class="r" style="left:0px;top:467px;width:53px;height:1224px;background:#f0f0f0"></div>
<div class="r" style="left:0px;top:467px;width:53px;height:76px;background:#d3d3d3"></div>
<div class="r" style="left:54px;top:468px;width:2787px;height:1223px;background:#fff"></div>
<div class="r" style="left:325px;top:468px;width:1px;height:1223px;background:#e0e0e0"></div>
<div class="r" style="left:461px;top:468px;width:1px;height:1223px;background:#e0e0e0"></div>
<div class="r" style="left:597px;top:468px;width:1px;height:1223px;background:#e0e0e0"></div>
<div class="r" style="left:733px;top:468px;width:1px;height:1223px;background:#e0e0e0"></div>
<div class="r" style="left:869px;top:468px;width:1px;height:1223px;background:#e0e0e0"></div>
<div class="r" style="left:1005px;top:468px;width:1px;height:1223px;background:#e0e0e0"></div>
<div class="r" style="left:1141px;top:468px;width:1px;height:1223px;background:#e0e0e0"></div>
<div class="r" style="left:1277px;top:468px;width:1px;height:1223px;background:#e0e0e0"></div>
<div class="r" style="left:1413px;top:468px;width:1px;height:1223px;background:#e0e0e0"></div>
<div class="r" style="left:1549px;top:468px;width:1px;height:1223px;background:#e0e0e0"></div>
<div class="r" style="left:1685px;top:468px;width:1px;height:1223px;background:#e0e0e0"></div>
<div class="r" style="left:1821px;top:505px;width:1px;height:1186px;background:#e0e0e0"></div>
<div class="r" style="left:1957px;top:468px;width:1px;height:1223px;background:#e0e0e0"></div>
<div class="r" style="left:2093px;top:505px;width:1px;height:1186px;background:#e0e0e0"></div>
<div class="r" style="left:2229px;top:468px;width:1px;height:1223px;background:#e0e0e0"></div>
<div class="r" style="left:2365px;top:468px;width:1px;height:1223px;background:#e0e0e0"></div>
<div class="r" style="left:2501px;top:468px;width:1px;height:1223px;background:#e0e0e0"></div>
<div class="r" style="left:2637px;top:468px;width:1px;height:1223px;background:#e0e0e0"></div>
<div class="r" style="left:2773px;top:468px;width:1px;height:1223px;background:#e0e0e0"></div>
<div class="r" style="left:189px;top:468px;width:1px;height:1223px;background:#e0e0e0"></div>
<div class="r" style="left:0px;top:505px;width:53px;height:1px;background:#c6c6c6"></div>
<div class="r" style="left:1413px;top:505px;width:816px;height:1px;background:#e0e0e0"></div>
<div class="r" style="left:2365px;top:505px;width:476px;height:1px;background:#e0e0e0"></div>
<div class="r" style="left:0px;top:543px;width:53px;height:1px;background:#c6c6c6"></div>
<div class="r" style="left:54px;top:543px;width:2787px;height:1px;background:#e0e0e0"></div>
<div class="r" style="left:0px;top:581px;width:53px;height:1px;background:#c6c6c6"></div>
<div class="r" style="left:54px;top:581px;width:2787px;height:1px;background:#e0e0e0"></div>
<div class="r" style="left:0px;top:619px;width:53px;height:1px;background:#c6c6c6"></div>
<div class="r" style="left:54px;top:619px;width:2787px;height:1px;background:#e0e0e0"></div>
<div class="r" style="left:0px;top:657px;width:53px;height:1px;background:#c6c6c6"></div>
<div class="r" style="left:54px;top:657px;width:2787px;height:1px;background:#e0e0e0"></div>
<div class="r" style="left:0px;top:695px;width:53px;height:1px;background:#c6c6c6"></div>
<div class="r" style="left:54px;top:695px;width:2787px;height:1px;background:#e0e0e0"></div>
<div class="r" style="left:0px;top:733px;width:53px;height:1px;background:#c6c6c6"></div>
<div class="r" style="left:54px;top:733px;width:2787px;height:1px;background:#e0e0e0"></div>
<div class="r" style="left:0px;top:771px;width:53px;height:1px;background:#c6c6c6"></div>
<div class="r" style="left:54px;top:771px;width:2787px;height:1px;background:#e0e0e0"></div>
<div class="r" style="left:0px;top:809px;width:53px;height:1px;background:#c6c6c6"></div>
<div class="r" style="left:54px;top:809px;width:2787px;height:1px;background:#e0e0e0"></div>
<div class="r" style="left:0px;top:847px;width:53px;height:1px;background:#c6c6c6"></div>
<div class="r" style="left:54px;top:847px;width:2787px;height:1px;background:#e0e0e0"></div>
<div class="r" style="left:0px;top:885px;width:53px;height:1px;background:#c6c6c6"></div>
<div class="r" style="left:54px;top:885px;width:2787px;height:1px;background:#e0e0e0"></div>
<div class="r" style="left:0px;top:923px;width:53px;height:1px;background:#c6c6c6"></div>
<div class="r" style="left:54px;top:923px;width:2787px;height:1px;background:#e0e0e0"></div>
<div class="r" style="left:0px;top:961px;width:53px;height:1px;background:#c6c6c6"></div>
<div class="r" style="left:54px;top:961px;width:2787px;height:1px;background:#e0e0e0"></div>
<div class="r" style="left:0px;top:999px;width:53px;height:1px;background:#c6c6c6"></div>
<div class="r" style="left:54px;top:999px;width:2787px;height:1px;background:#e0e0e0"></div>
<div class="r" style="left:0px;top:1037px;width:53px;height:1px;background:#c6c6c6"></div>
<div class="r" style="left:54px;top:1037px;width:2787px;height:1px;background:#e0e0e0"></div>
<div class="r" style="left:0px;top:1075px;width:53px;height:1px;background:#c6c6c6"></div>
<div class="r" style="left:54px;top:1075px;width:2787px;height:1px;background:#e0e0e0"></div>
<div class="r" style="left:0px;top:1113px;width:53px;height:1px;background:#c6c6c6"></div>
<div class="r" style="left:54px;top:1113px;width:2787px;height:1px;background:#e0e0e0"></div>
<div class="r" style="left:0px;top:1151px;width:53px;height:1px;background:#c6c6c6"></div>
<div class="r" style="left:54px;top:1151px;width:2787px;height:1px;background:#e0e0e0"></div>
<div class="r" style="left:0px;top:1189px;width:53px;height:1px;background:#c6c6c6"></div>
<div class="r" style="left:54px;top:1189px;width:2787px;height:1px;background:#e0e0e0"></div>
<div class="r" style="left:0px;top:1227px;width:53px;height:1px;background:#c6c6c6"></div>
<div class="r" style="left:54px;top:1227px;width:2787px;height:1px;background:#e0e0e0"></div>
<div class="r" style="left:0px;top:1265px;width:53px;height:1px;background:#c6c6c6"></div>
<div class="r" style="left:54px;top:1265px;width:2787px;height:1px;background:#e0e0e0"></div>
<div class="r" style="left:0px;top:1303px;width:53px;height:1px;background:#c6c6c6"></div>
<div class="r" style="left:54px;top:1303px;width:2787px;height:1px;background:#e0e0e0"></div>
<div class="r" style="left:0px;top:1341px;width:53px;height:1px;background:#c6c6c6"></div>
<div class="r" style="left:54px;top:1341px;width:2787px;height:1px;background:#e0e0e0"></div>
<div class="r" style="left:0px;top:1379px;width:53px;height:1px;background:#c6c6c6"></div>
<div class="r" style="left:54px;top:1379px;width:2787px;height:1px;background:#e0e0e0"></div>
<div class="r" style="left:0px;top:1417px;width:53px;height:1px;background:#c6c6c6"></div>
<div class="r" style="left:54px;top:1417px;width:2787px;height:1px;background:#e0e0e0"></div>
<div class="r" style="left:0px;top:1455px;width:53px;height:1px;background:#c6c6c6"></div>
<div class="r" style="left:54px;top:1455px;width:2787px;height:1px;background:#e0e0e0"></div>
<div class="r" style="left:0px;top:1493px;width:53px;height:1px;background:#c6c6c6"></div>
<div class="r" style="left:54px;top:1493px;width:2787px;height:1px;background:#e0e0e0"></div>
<div class="r" style="left:0px;top:1531px;width:53px;height:1px;background:#c6c6c6"></div>
<div class="r" style="left:54px;top:1531px;width:2787px;height:1px;background:#e0e0e0"></div>
<div class="r" style="left:0px;top:1569px;width:53px;height:1px;background:#c6c6c6"></div>
<div class="r" style="left:54px;top:1569px;width:2787px;height:1px;background:#e0e0e0"></div>
<div class="r" style="left:0px;top:1607px;width:53px;height:1px;background:#c6c6c6"></div>
<div class="r" style="left:54px;top:1607px;width:2787px;height:1px;background:#e0e0e0"></div>
<div class="r" style="left:0px;top:1645px;width:53px;height:1px;background:#c6c6c6"></div>
<div class="r" style="left:54px;top:1645px;width:2787px;height:1px;background:#e0e0e0"></div>
<div class="r" style="left:0px;top:1683px;width:53px;height:1px;background:#c6c6c6"></div>
<div class="r" style="left:54px;top:1683px;width:2787px;height:1px;background:#e0e0e0"></div>
<div class="r" style="left:53px;top:430px;width:1px;height:1261px;background:#a0a0a0"></div>
<div class="r" style="left:0px;top:467px;width:2841px;height:1px;background:#9e9e9e"></div>
<div class="r" style="left:0px;top:543px;width:53px;height:1px;background:#a8aca8"></div>
<div class="t" style="left:19.3px;top:473.6px;font-size:26px;color:#1b6b45;">1</div>
<div class="t" style="left:19.3px;top:511.6px;font-size:26px;color:#1b6b45;">2</div>
<div class="t" style="left:19.3px;top:549.6px;font-size:26px;color:#262626;">3</div>
<div class="t" style="left:19.3px;top:587.6px;font-size:26px;color:#262626;">4</div>
<div class="t" style="left:19.3px;top:625.6px;font-size:26px;color:#262626;">5</div>
<div class="t" style="left:19.3px;top:663.6px;font-size:26px;color:#262626;">6</div>
<div class="t" style="left:19.3px;top:701.6px;font-size:26px;color:#262626;">7</div>
<div class="t" style="left:19.3px;top:739.6px;font-size:26px;color:#262626;">8</div>
<div class="t" style="left:19.3px;top:777.6px;font-size:26px;color:#262626;">9</div>
<div class="t" style="left:12.0px;top:815.6px;font-size:26px;color:#262626;">10</div>
<div class="t" style="left:12.0px;top:853.6px;font-size:26px;color:#262626;">11</div>
<div class="t" style="left:12.0px;top:891.6px;font-size:26px;color:#262626;">12</div>
<div class="t" style="left:12.0px;top:929.6px;font-size:26px;color:#262626;">13</div>
<div class="t" style="left:12.0px;top:967.6px;font-size:26px;color:#262626;">14</div>
<div class="t" style="left:12.0px;top:1005.6px;font-size:26px;color:#262626;">15</div>
<div class="t" style="left:12.0px;top:1043.6px;font-size:26px;color:#262626;">16</div>
<div class="t" style="left:12.0px;top:1081.6px;font-size:26px;color:#262626;">17</div>
<div class="t" style="left:12.0px;top:1119.6px;font-size:26px;color:#262626;">18</div>
<div class="t" style="left:12.0px;top:1157.6px;font-size:26px;color:#262626;">19</div>
<div class="t" style="left:12.0px;top:1195.6px;font-size:26px;color:#262626;">20</div>
<div class="t" style="left:12.0px;top:1233.6px;font-size:26px;color:#262626;">21</div>
<div class="t" style="left:12.0px;top:1271.6px;font-size:26px;color:#262626;">22</div>
<div class="t" style="left:12.0px;top:1309.6px;font-size:26px;color:#262626;">23</div>
<div class="t" style="left:12.0px;top:1347.6px;font-size:26px;color:#262626;">24</div>
<div class="t" style="left:12.0px;top:1385.6px;font-size:26px;color:#262626;">25</div>
<div class="t" style="left:12.0px;top:1423.6px;font-size:26px;color:#262626;">26</div>
<div class="t" style="left:12.0px;top:1461.6px;font-size:26px;color:#262626;">27</div>
<div class="t" style="left:12.0px;top:1499.6px;font-size:26px;color:#262626;">28</div>
<div class="t" style="left:12.0px;top:1537.6px;font-size:26px;color:#262626;">29</div>
<div class="t" style="left:12.0px;top:1575.6px;font-size:26px;color:#262626;">30</div>
<div class="t" style="left:12.0px;top:1613.6px;font-size:26px;color:#262626;">31</div>
<div class="t" style="left:12.0px;top:1651.6px;font-size:26px;color:#262626;">32</div>
<div class="r" style="left:54px;top:505px;width:135px;height:38px;overflow:hidden">
<div class="t" style="left:4.5px;top:6.1px;font-size:26px;color:#000;transform:scaleX(1.0129);">No</div>
</div>
<div class="r" style="left:190px;top:505px;width:135px;height:38px;overflow:hidden">
<div class="t" style="left:4.5px;top:6.1px;font-size:26px;color:#000;transform:scaleX(0.9944);">Nama</div>
</div>
<div class="r" style="left:326px;top:505px;width:135px;height:38px;overflow:hidden">
<div class="t" style="left:4.5px;top:6.1px;font-size:26px;color:#000;transform:scaleX(0.9370);">NIP</div>
</div>
<div class="r" style="left:462px;top:505px;width:135px;height:38px;overflow:hidden">
<div class="t" style="left:4.5px;top:6.1px;font-size:26px;color:#000;transform:scaleX(0.9828);">Status</div>
</div>
<div class="r" style="left:598px;top:505px;width:135px;height:38px;overflow:hidden">
<div class="t" style="left:4.5px;top:6.1px;font-size:26px;color:#000;transform:scaleX(0.9743);">Jabatan</div>
</div>
<div class="r" style="left:734px;top:505px;width:135px;height:38px;overflow:hidden">
<div class="t" style="left:4.5px;top:6.1px;font-size:26px;color:#000;transform:scaleX(1.0272);">Departemen</div>
</div>
<div class="r" style="left:870px;top:505px;width:135px;height:38px;overflow:hidden">
<div class="t" style="left:4.5px;top:6.1px;font-size:26px;color:#000;">Ikatan Kerja</div>
</div>
<div class="r" style="left:1006px;top:505px;width:135px;height:38px;overflow:hidden">
<div class="t" style="left:4.5px;top:6.1px;font-size:26px;color:#000;transform:scaleX(0.9551);">Lokasi</div>
</div>
<div class="r" style="left:1142px;top:505px;width:135px;height:38px;overflow:hidden">
<div class="t" style="left:4.5px;top:6.1px;font-size:26px;color:#000;transform:scaleX(0.9532);">Lokasi Pajak</div>
</div>
<div class="r" style="left:1278px;top:505px;width:135px;height:38px;overflow:hidden">
<div class="t" style="left:4.5px;top:6.1px;font-size:26px;color:#000;transform:scaleX(0.9782);">Gaji Pokok</div>
</div>
<div class="r" style="left:1414px;top:505px;width:135px;height:38px;overflow:hidden">
<div class="t" style="left:4.5px;top:6.1px;font-size:26px;color:#000;transform:scaleX(0.9729);">1.74% Perusahaan</div>
</div>
<div class="r" style="left:1550px;top:505px;width:135px;height:38px;overflow:hidden">
<div class="t" style="left:4.5px;top:6.1px;font-size:26px;color:#000;transform:scaleX(0.9729);">0.30% Perusahaan</div>
</div>
<div class="r" style="left:1686px;top:505px;width:135px;height:38px;overflow:hidden">
<div class="t" style="left:4.5px;top:6.1px;font-size:26px;color:#000;transform:scaleX(0.9755);">2% Karyawan</div>
</div>
<div class="r" style="left:1822px;top:505px;width:135px;height:38px;overflow:hidden">
<div class="t" style="left:4.5px;top:6.1px;font-size:26px;color:#000;transform:scaleX(0.9729);">3.70% Perusahaan</div>
</div>
<div class="r" style="left:1958px;top:505px;width:135px;height:38px;overflow:hidden">
<div class="t" style="left:4.5px;top:6.1px;font-size:26px;color:#000;transform:scaleX(0.9755);">1% Karyawan</div>
</div>
<div class="r" style="left:2094px;top:505px;width:135px;height:38px;overflow:hidden">
<div class="t" style="left:4.5px;top:6.1px;font-size:26px;color:#000;transform:scaleX(0.9649);">2% Perusahaan</div>
</div>
<div class="r" style="left:2230px;top:505px;width:135px;height:38px;overflow:hidden">
<div class="t" style="left:4.5px;top:6.1px;font-size:26px;color:#000;transform:scaleX(1.0214);">Total</div>
</div>
<div class="t" style="left:1419.0px;top:472.6px;font-size:26px;color:#000;transform:scaleX(0.8180);">JKK</div>
<div class="t" style="left:1555.0px;top:472.6px;font-size:26px;color:#000;transform:scaleX(0.9350);">JKM</div>
<div class="t" style="left:1691.0px;top:472.6px;font-size:26px;color:#000;transform:scaleX(0.8606);">JHT</div>
<div class="t" style="left:1963.0px;top:472.6px;font-size:26px;color:#000;transform:scaleX(0.9202);">IP/JP</div>
<div class="t" style="left:168.3px;top:549.1px;font-size:26px;color:#000;transform:scaleX(1.0150);">1</div>
<div class="r" style="left:190px;top:543px;width:135px;height:38px;overflow:hidden">
<div class="t" style="left:4.5px;top:6.1px;font-size:26px;color:#000;transform:scaleX(0.9198);">YOSINTA NOVITA</div>
</div>
<div class="r" style="left:326px;top:543px;width:135px;height:38px;overflow:hidden">
<div class="t" style="left:4.5px;top:6.1px;font-size:26px;color:#000;">MRD00001</div>
</div>
<div class="t" style="left:467.0px;top:549.1px;font-size:26px;color:#000;">TK/0</div>
<div class="t" style="left:1011.0px;top:549.1px;font-size:26px;color:#000;transform:scaleX(0.8803);">ALL</div>
<div class="r" style="left:1142px;top:543px;width:135px;height:38px;overflow:hidden">
<div class="t" style="left:4.5px;top:6.1px;font-size:26px;color:#000;transform:scaleX(0.9608);">KPP Madya Jakarta</div>
</div>
<div class="t" style="left:1289.6px;top:549.1px;font-size:26px;color:#000;transform:scaleX(1.0150);">12000000</div>
<div class="t" style="left:2241.6px;top:549.1px;font-size:26px;color:#000;transform:scaleX(1.0150);">12000000</div>
<div class="t" style="left:168.3px;top:587.1px;font-size:26px;color:#000;transform:scaleX(1.0150);">2</div>
<div class="r" style="left:190px;top:581px;width:135px;height:38px;overflow:hidden">
<div class="t" style="left:4.5px;top:6.1px;font-size:26px;color:#000;transform:scaleX(0.9575);">MEGA INDAH</div>
</div>
<div class="r" style="left:326px;top:581px;width:135px;height:38px;overflow:hidden">
<div class="t" style="left:4.5px;top:6.1px;font-size:26px;color:#000;">MRD00002</div>
</div>
<div class="t" style="left:467.0px;top:587.1px;font-size:26px;color:#000;">TK/0</div>
<div class="t" style="left:1011.0px;top:587.1px;font-size:26px;color:#000;transform:scaleX(0.8803);">ALL</div>
<div class="r" style="left:1142px;top:581px;width:135px;height:38px;overflow:hidden">
<div class="t" style="left:4.5px;top:6.1px;font-size:26px;color:#000;transform:scaleX(0.9608);">KPP Madya Jakarta</div>
</div>
<div class="t" style="left:1304.3px;top:587.1px;font-size:26px;color:#000;transform:scaleX(1.0150);">5000000</div>
<div class="t" style="left:2256.3px;top:587.1px;font-size:26px;color:#000;transform:scaleX(1.0150);">5000000</div>
<div class="t" style="left:168.3px;top:625.1px;font-size:26px;color:#000;transform:scaleX(1.0150);">3</div>
<div class="r" style="left:190px;top:619px;width:135px;height:38px;overflow:hidden">
<div class="t" style="left:4.5px;top:6.1px;font-size:26px;color:#000;transform:scaleX(0.9353);">AMBROSIA</div>
</div>
<div class="r" style="left:326px;top:619px;width:135px;height:38px;overflow:hidden">
<div class="t" style="left:4.5px;top:6.1px;font-size:26px;color:#000;">MRD00003</div>
</div>
<div class="t" style="left:467.0px;top:625.1px;font-size:26px;color:#000;">TK/0</div>
<div class="t" style="left:1011.0px;top:625.1px;font-size:26px;color:#000;transform:scaleX(0.8803);">ALL</div>
<div class="r" style="left:1142px;top:619px;width:135px;height:38px;overflow:hidden">
<div class="t" style="left:4.5px;top:6.1px;font-size:26px;color:#000;transform:scaleX(0.9608);">KPP Madya Jakarta</div>
</div>
<div class="t" style="left:1304.3px;top:625.1px;font-size:26px;color:#000;transform:scaleX(1.0150);">5000000</div>
<div class="t" style="left:2256.3px;top:625.1px;font-size:26px;color:#000;transform:scaleX(1.0150);">5000000</div>
<div class="t" style="left:168.3px;top:663.1px;font-size:26px;color:#000;transform:scaleX(1.0150);">4</div>
<div class="r" style="left:190px;top:657px;width:135px;height:38px;overflow:hidden">
<div class="t" style="left:4.5px;top:6.1px;font-size:26px;color:#000;transform:scaleX(0.9115);">USNUL KHAIR</div>
</div>
<div class="r" style="left:326px;top:657px;width:135px;height:38px;overflow:hidden">
<div class="t" style="left:4.5px;top:6.1px;font-size:26px;color:#000;">MRD00004</div>
</div>
<div class="t" style="left:467.0px;top:663.1px;font-size:26px;color:#000;">TK/0</div>
<div class="t" style="left:1011.0px;top:663.1px;font-size:26px;color:#000;transform:scaleX(0.8803);">ALL</div>
<div class="r" style="left:1142px;top:657px;width:135px;height:38px;overflow:hidden">
<div class="t" style="left:4.5px;top:6.1px;font-size:26px;color:#000;transform:scaleX(0.9608);">KPP Madya Jakarta</div>
</div>
<div class="t" style="left:1304.3px;top:663.1px;font-size:26px;color:#000;transform:scaleX(1.0150);">5000000</div>
<div class="t" style="left:1469.6px;top:663.1px;font-size:26px;color:#000;transform:scaleX(1.0150);">87000</div>
<div class="t" style="left:1605.6px;top:663.1px;font-size:26px;color:#000;transform:scaleX(1.0150);">15000</div>
<div class="t" style="left:1726.9px;top:663.1px;font-size:26px;color:#000;transform:scaleX(1.0150);">100000</div>
<div class="t" style="left:1862.9px;top:663.1px;font-size:26px;color:#000;transform:scaleX(1.0150);">185001</div>
<div class="t" style="left:2013.6px;top:663.1px;font-size:26px;color:#000;transform:scaleX(1.0150);">50000</div>
<div class="t" style="left:2134.9px;top:663.1px;font-size:26px;color:#000;transform:scaleX(1.0150);">100000</div>
<div class="t" style="left:2256.3px;top:663.1px;font-size:26px;color:#000;transform:scaleX(1.0150);">5537001</div>
<div class="t" style="left:168.3px;top:701.1px;font-size:26px;color:#000;transform:scaleX(1.0150);">5</div>
<div class="r" style="left:190px;top:695px;width:135px;height:38px;overflow:hidden">
<div class="t" style="left:4.5px;top:6.1px;font-size:26px;color:#000;transform:scaleX(0.8632);">CIPLUK LISTY</div>
</div>
<div class="r" style="left:326px;top:695px;width:135px;height:38px;overflow:hidden">
<div class="t" style="left:4.5px;top:6.1px;font-size:26px;color:#000;">MRD00005</div>
</div>
<div class="t" style="left:467.0px;top:701.1px;font-size:26px;color:#000;">TK/0</div>
<div class="t" style="left:1011.0px;top:701.1px;font-size:26px;color:#000;transform:scaleX(0.8803);">ALL</div>
<div class="r" style="left:1142px;top:695px;width:135px;height:38px;overflow:hidden">
<div class="t" style="left:4.5px;top:6.1px;font-size:26px;color:#000;transform:scaleX(0.9608);">KPP Madya Jakarta</div>
</div>
<div class="t" style="left:1304.3px;top:701.1px;font-size:26px;color:#000;transform:scaleX(1.0150);">5000000</div>
<div class="t" style="left:1469.6px;top:701.1px;font-size:26px;color:#000;transform:scaleX(1.0150);">87000</div>
<div class="t" style="left:1605.6px;top:701.1px;font-size:26px;color:#000;transform:scaleX(1.0150);">15000</div>
<div class="t" style="left:1726.9px;top:701.1px;font-size:26px;color:#000;transform:scaleX(1.0150);">100000</div>
<div class="t" style="left:1862.9px;top:701.1px;font-size:26px;color:#000;transform:scaleX(1.0150);">185001</div>
<div class="t" style="left:2013.6px;top:701.1px;font-size:26px;color:#000;transform:scaleX(1.0150);">50000</div>
<div class="t" style="left:2134.9px;top:701.1px;font-size:26px;color:#000;transform:scaleX(1.0150);">100000</div>
<div class="t" style="left:2256.3px;top:701.1px;font-size:26px;color:#000;transform:scaleX(1.0150);">5537001</div>
<div class="t" style="left:168.3px;top:739.1px;font-size:26px;color:#000;transform:scaleX(1.0150);">6</div>
<div class="r" style="left:190px;top:733px;width:135px;height:38px;overflow:hidden">
<div class="t" style="left:4.5px;top:6.1px;font-size:26px;color:#000;transform:scaleX(0.8702);">HERRY CATUR</div>
</div>
<div class="r" style="left:326px;top:733px;width:135px;height:38px;overflow:hidden">
<div class="t" style="left:4.5px;top:6.1px;font-size:26px;color:#000;">MRD00006</div>
</div>
<div class="t" style="left:467.0px;top:739.1px;font-size:26px;color:#000;">TK/0</div>
<div class="t" style="left:1011.0px;top:739.1px;font-size:26px;color:#000;transform:scaleX(0.8803);">ALL</div>
<div class="r" style="left:1142px;top:733px;width:135px;height:38px;overflow:hidden">
<div class="t" style="left:4.5px;top:6.1px;font-size:26px;color:#000;transform:scaleX(0.9608);">KPP Madya Jakarta</div>
</div>
<div class="t" style="left:1304.3px;top:739.1px;font-size:26px;color:#000;transform:scaleX(1.0150);">5000000</div>
<div class="t" style="left:1469.6px;top:739.1px;font-size:26px;color:#000;transform:scaleX(1.0150);">87000</div>
<div class="t" style="left:1605.6px;top:739.1px;font-size:26px;color:#000;transform:scaleX(1.0150);">15000</div>
<div class="t" style="left:1726.9px;top:739.1px;font-size:26px;color:#000;transform:scaleX(1.0150);">100000</div>
<div class="t" style="left:1862.9px;top:739.1px;font-size:26px;color:#000;transform:scaleX(1.0150);">185001</div>
<div class="t" style="left:2013.6px;top:739.1px;font-size:26px;color:#000;transform:scaleX(1.0150);">50000</div>
<div class="t" style="left:2134.9px;top:739.1px;font-size:26px;color:#000;transform:scaleX(1.0150);">100000</div>
<div class="t" style="left:2256.3px;top:739.1px;font-size:26px;color:#000;transform:scaleX(1.0150);">5537001</div>
<div class="t" style="left:168.3px;top:777.1px;font-size:26px;color:#000;transform:scaleX(1.0150);">7</div>
<div class="r" style="left:190px;top:771px;width:135px;height:38px;overflow:hidden">
<div class="t" style="left:4.5px;top:6.1px;font-size:26px;color:#000;transform:scaleX(0.9571);">AHMAD FAUZI</div>
</div>
<div class="r" style="left:326px;top:771px;width:135px;height:38px;overflow:hidden">
<div class="t" style="left:4.5px;top:6.1px;font-size:26px;color:#000;">MRD00007</div>
</div>
<div class="t" style="left:467.0px;top:777.1px;font-size:26px;color:#000;">TK/0</div>
<div class="t" style="left:1011.0px;top:777.1px;font-size:26px;color:#000;transform:scaleX(0.8803);">ALL</div>
<div class="r" style="left:1142px;top:771px;width:135px;height:38px;overflow:hidden">
<div class="t" style="left:4.5px;top:6.1px;font-size:26px;color:#000;transform:scaleX(0.9608);">KPP Madya Jakarta</div>
</div>
<div class="t" style="left:1304.3px;top:777.1px;font-size:26px;color:#000;transform:scaleX(1.0150);">5000000</div>
<div class="t" style="left:1469.6px;top:777.1px;font-size:26px;color:#000;transform:scaleX(1.0150);">87000</div>
<div class="t" style="left:1605.6px;top:777.1px;font-size:26px;color:#000;transform:scaleX(1.0150);">15000</div>
<div class="t" style="left:1726.9px;top:777.1px;font-size:26px;color:#000;transform:scaleX(1.0150);">100000</div>
<div class="t" style="left:1862.9px;top:777.1px;font-size:26px;color:#000;transform:scaleX(1.0150);">185001</div>
<div class="t" style="left:2013.6px;top:777.1px;font-size:26px;color:#000;transform:scaleX(1.0150);">50000</div>
<div class="t" style="left:2134.9px;top:777.1px;font-size:26px;color:#000;transform:scaleX(1.0150);">100000</div>
<div class="t" style="left:2256.3px;top:777.1px;font-size:26px;color:#000;transform:scaleX(1.0150);">5537001</div>
<div class="t" style="left:168.3px;top:815.1px;font-size:26px;color:#000;transform:scaleX(1.0150);">8</div>
<div class="r" style="left:190px;top:809px;width:135px;height:38px;overflow:hidden">
<div class="t" style="left:4.5px;top:6.1px;font-size:26px;color:#000;transform:scaleX(0.9125);">SHELAWATI</div>
</div>
<div class="r" style="left:326px;top:809px;width:135px;height:38px;overflow:hidden">
<div class="t" style="left:4.5px;top:6.1px;font-size:26px;color:#000;">MRD00008</div>
</div>
<div class="t" style="left:467.0px;top:815.1px;font-size:26px;color:#000;">TK/0</div>
<div class="t" style="left:1011.0px;top:815.1px;font-size:26px;color:#000;transform:scaleX(0.8803);">ALL</div>
<div class="r" style="left:1142px;top:809px;width:135px;height:38px;overflow:hidden">
<div class="t" style="left:4.5px;top:6.1px;font-size:26px;color:#000;transform:scaleX(0.9608);">KPP Madya Jakarta</div>
</div>
<div class="t" style="left:1304.3px;top:815.1px;font-size:26px;color:#000;transform:scaleX(1.0150);">5000000</div>
<div class="t" style="left:2256.3px;top:815.1px;font-size:26px;color:#000;transform:scaleX(1.0150);">5000000</div>
<div class="t" style="left:168.3px;top:853.1px;font-size:26px;color:#000;transform:scaleX(1.0150);">9</div>
<div class="r" style="left:190px;top:847px;width:135px;height:38px;overflow:hidden">
<div class="t" style="left:4.5px;top:6.1px;font-size:26px;color:#000;transform:scaleX(0.9255);">RICAT SURAHMAN</div>
</div>
<div class="r" style="left:326px;top:847px;width:135px;height:38px;overflow:hidden">
<div class="t" style="left:4.5px;top:6.1px;font-size:26px;color:#000;">MRD00009</div>
</div>
<div class="t" style="left:467.0px;top:853.1px;font-size:26px;color:#000;">TK/0</div>
<div class="t" style="left:1011.0px;top:853.1px;font-size:26px;color:#000;transform:scaleX(0.8803);">ALL</div>
<div class="r" style="left:1142px;top:847px;width:135px;height:38px;overflow:hidden">
<div class="t" style="left:4.5px;top:6.1px;font-size:26px;color:#000;transform:scaleX(0.9608);">KPP Madya Jakarta</div>
</div>
<div class="t" style="left:1304.3px;top:853.1px;font-size:26px;color:#000;transform:scaleX(1.0150);">5000000</div>
<div class="t" style="left:1469.6px;top:853.1px;font-size:26px;color:#000;transform:scaleX(1.0150);">87000</div>
<div class="t" style="left:1605.6px;top:853.1px;font-size:26px;color:#000;transform:scaleX(1.0150);">15000</div>
<div class="t" style="left:1726.9px;top:853.1px;font-size:26px;color:#000;transform:scaleX(1.0150);">100000</div>
<div class="t" style="left:1862.9px;top:853.1px;font-size:26px;color:#000;transform:scaleX(1.0150);">185001</div>
<div class="t" style="left:2013.6px;top:853.1px;font-size:26px;color:#000;transform:scaleX(1.0150);">50000</div>
<div class="t" style="left:2134.9px;top:853.1px;font-size:26px;color:#000;transform:scaleX(1.0150);">100000</div>
<div class="t" style="left:2256.3px;top:853.1px;font-size:26px;color:#000;transform:scaleX(1.0150);">5537001</div>
<div class="t" style="left:153.6px;top:891.1px;font-size:26px;color:#000;transform:scaleX(1.0150);">10</div>
<div class="r" style="left:190px;top:885px;width:135px;height:38px;overflow:hidden">
<div class="t" style="left:4.5px;top:6.1px;font-size:26px;color:#000;transform:scaleX(0.8840);">HENDRIKUS S</div>
</div>
<div class="r" style="left:326px;top:885px;width:135px;height:38px;overflow:hidden">
<div class="t" style="left:4.5px;top:6.1px;font-size:26px;color:#000;">MRD00010</div>
</div>
<div class="t" style="left:467.0px;top:891.1px;font-size:26px;color:#000;">TK/0</div>
<div class="t" style="left:1011.0px;top:891.1px;font-size:26px;color:#000;transform:scaleX(0.8803);">ALL</div>
<div class="r" style="left:1142px;top:885px;width:135px;height:38px;overflow:hidden">
<div class="t" style="left:4.5px;top:6.1px;font-size:26px;color:#000;transform:scaleX(0.9608);">KPP Madya Jakarta</div>
</div>
<div class="t" style="left:1304.3px;top:891.1px;font-size:26px;color:#000;transform:scaleX(1.0150);">5000000</div>
<div class="t" style="left:1469.6px;top:891.1px;font-size:26px;color:#000;transform:scaleX(1.0150);">87000</div>
<div class="t" style="left:1605.6px;top:891.1px;font-size:26px;color:#000;transform:scaleX(1.0150);">15000</div>
<div class="t" style="left:1726.9px;top:891.1px;font-size:26px;color:#000;transform:scaleX(1.0150);">100000</div>
<div class="t" style="left:1862.9px;top:891.1px;font-size:26px;color:#000;transform:scaleX(1.0150);">185001</div>
<div class="t" style="left:2013.6px;top:891.1px;font-size:26px;color:#000;transform:scaleX(1.0150);">50000</div>
<div class="t" style="left:2134.9px;top:891.1px;font-size:26px;color:#000;transform:scaleX(1.0150);">100000</div>
<div class="t" style="left:2256.3px;top:891.1px;font-size:26px;color:#000;transform:scaleX(1.0150);">5537001</div>
<div class="t" style="left:153.6px;top:929.1px;font-size:26px;color:#000;transform:scaleX(1.0150);">11</div>
<div class="r" style="left:190px;top:923px;width:135px;height:38px;overflow:hidden">
<div class="t" style="left:4.5px;top:6.1px;font-size:26px;color:#000;transform:scaleX(0.8900);">FERDYNATA</div>
</div>
<div class="r" style="left:326px;top:923px;width:135px;height:38px;overflow:hidden">
<div class="t" style="left:4.5px;top:6.1px;font-size:26px;color:#000;">MRD00011</div>
</div>
<div class="t" style="left:467.0px;top:929.1px;font-size:26px;color:#000;">TK/0</div>
<div class="t" style="left:1011.0px;top:929.1px;font-size:26px;color:#000;transform:scaleX(0.8803);">ALL</div>
<div class="r" style="left:1142px;top:923px;width:135px;height:38px;overflow:hidden">
<div class="t" style="left:4.5px;top:6.1px;font-size:26px;color:#000;transform:scaleX(0.9608);">KPP Madya Jakarta</div>
</div>
<div class="t" style="left:1304.3px;top:929.1px;font-size:26px;color:#000;transform:scaleX(1.0150);">5000000</div>
<div class="t" style="left:2256.3px;top:929.1px;font-size:26px;color:#000;transform:scaleX(1.0150);">5000000</div>
<div class="t" style="left:153.6px;top:967.1px;font-size:26px;color:#000;transform:scaleX(1.0150);">12</div>
<div class="r" style="left:190px;top:961px;width:135px;height:38px;overflow:hidden">
<div class="t" style="left:4.5px;top:6.1px;font-size:26px;color:#000;transform:scaleX(0.9426);">ERNI WAHIDA</div>
</div>
<div class="r" style="left:326px;top:961px;width:135px;height:38px;overflow:hidden">
<div class="t" style="left:4.5px;top:6.1px;font-size:26px;color:#000;">MRD00012</div>
</div>
<div class="t" style="left:467.0px;top:967.1px;font-size:26px;color:#000;">TK/0</div>
<div class="t" style="left:1011.0px;top:967.1px;font-size:26px;color:#000;transform:scaleX(0.8803);">ALL</div>
<div class="r" style="left:1142px;top:961px;width:135px;height:38px;overflow:hidden">
<div class="t" style="left:4.5px;top:6.1px;font-size:26px;color:#000;transform:scaleX(0.9608);">KPP Madya Jakarta</div>
</div>
<div class="t" style="left:1304.3px;top:967.1px;font-size:26px;color:#000;transform:scaleX(1.0150);">5000000</div>
<div class="t" style="left:1469.6px;top:967.1px;font-size:26px;color:#000;transform:scaleX(1.0150);">87000</div>
<div class="t" style="left:1605.6px;top:967.1px;font-size:26px;color:#000;transform:scaleX(1.0150);">15000</div>
<div class="t" style="left:1726.9px;top:967.1px;font-size:26px;color:#000;transform:scaleX(1.0150);">100000</div>
<div class="t" style="left:1862.9px;top:967.1px;font-size:26px;color:#000;transform:scaleX(1.0150);">185001</div>
<div class="t" style="left:2013.6px;top:967.1px;font-size:26px;color:#000;transform:scaleX(1.0150);">50000</div>
<div class="t" style="left:2134.9px;top:967.1px;font-size:26px;color:#000;transform:scaleX(1.0150);">100000</div>
<div class="t" style="left:2256.3px;top:967.1px;font-size:26px;color:#000;transform:scaleX(1.0150);">5537001</div>
<div class="t" style="left:153.6px;top:1005.1px;font-size:26px;color:#000;transform:scaleX(1.0150);">13</div>
<div class="r" style="left:190px;top:999px;width:135px;height:38px;overflow:hidden">
<div class="t" style="left:4.5px;top:6.1px;font-size:26px;color:#000;transform:scaleX(0.8933);">OKY TEGUH</div>
</div>
<div class="r" style="left:326px;top:999px;width:135px;height:38px;overflow:hidden">
<div class="t" style="left:4.5px;top:6.1px;font-size:26px;color:#000;">MRD00013</div>
</div>
<div class="t" style="left:467.0px;top:1005.1px;font-size:26px;color:#000;">TK/0</div>
<div class="t" style="left:1011.0px;top:1005.1px;font-size:26px;color:#000;transform:scaleX(0.8803);">ALL</div>
<div class="r" style="left:1142px;top:999px;width:135px;height:38px;overflow:hidden">
<div class="t" style="left:4.5px;top:6.1px;font-size:26px;color:#000;transform:scaleX(0.9608);">KPP Madya Jakarta</div>
</div>
<div class="t" style="left:1304.3px;top:1005.1px;font-size:26px;color:#000;transform:scaleX(1.0150);">5000000</div>
<div class="t" style="left:2256.3px;top:1005.1px;font-size:26px;color:#000;transform:scaleX(1.0150);">5000000</div>
<div class="t" style="left:153.6px;top:1043.1px;font-size:26px;color:#000;transform:scaleX(1.0150);">14</div>
<div class="r" style="left:190px;top:1037px;width:135px;height:38px;overflow:hidden">
<div class="t" style="left:4.5px;top:6.1px;font-size:26px;color:#000;transform:scaleX(1.0309);">MUHAMMAD</div>
</div>
<div class="r" style="left:326px;top:1037px;width:135px;height:38px;overflow:hidden">
<div class="t" style="left:4.5px;top:6.1px;font-size:26px;color:#000;">MRD00014</div>
</div>
<div class="t" style="left:467.0px;top:1043.1px;font-size:26px;color:#000;">TK/0</div>
<div class="t" style="left:1011.0px;top:1043.1px;font-size:26px;color:#000;transform:scaleX(0.8803);">ALL</div>
<div class="r" style="left:1142px;top:1037px;width:135px;height:38px;overflow:hidden">
<div class="t" style="left:4.5px;top:6.1px;font-size:26px;color:#000;transform:scaleX(0.9608);">KPP Madya Jakarta</div>
</div>
<div class="t" style="left:1304.3px;top:1043.1px;font-size:26px;color:#000;transform:scaleX(1.0150);">5000000</div>
<div class="t" style="left:1469.6px;top:1043.1px;font-size:26px;color:#000;transform:scaleX(1.0150);">87000</div>
<div class="t" style="left:1605.6px;top:1043.1px;font-size:26px;color:#000;transform:scaleX(1.0150);">15000</div>
<div class="t" style="left:1726.9px;top:1043.1px;font-size:26px;color:#000;transform:scaleX(1.0150);">100000</div>
<div class="t" style="left:1862.9px;top:1043.1px;font-size:26px;color:#000;transform:scaleX(1.0150);">185001</div>
<div class="t" style="left:2013.6px;top:1043.1px;font-size:26px;color:#000;transform:scaleX(1.0150);">50000</div>
<div class="t" style="left:2134.9px;top:1043.1px;font-size:26px;color:#000;transform:scaleX(1.0150);">100000</div>
<div class="t" style="left:2256.3px;top:1043.1px;font-size:26px;color:#000;transform:scaleX(1.0150);">5537001</div>
<div class="t" style="left:153.6px;top:1081.1px;font-size:26px;color:#000;transform:scaleX(1.0150);">15</div>
<div class="r" style="left:190px;top:1075px;width:135px;height:38px;overflow:hidden">
<div class="t" style="left:4.5px;top:6.1px;font-size:26px;color:#000;transform:scaleX(0.8881);">BENEDIKTUS</div>
</div>
<div class="r" style="left:326px;top:1075px;width:135px;height:38px;overflow:hidden">
<div class="t" style="left:4.5px;top:6.1px;font-size:26px;color:#000;">MRD00015</div>
</div>
<div class="t" style="left:467.0px;top:1081.1px;font-size:26px;color:#000;">TK/0</div>
<div class="t" style="left:1011.0px;top:1081.1px;font-size:26px;color:#000;transform:scaleX(0.8803);">ALL</div>
<div class="r" style="left:1142px;top:1075px;width:135px;height:38px;overflow:hidden">
<div class="t" style="left:4.5px;top:6.1px;font-size:26px;color:#000;transform:scaleX(0.9608);">KPP Madya Jakarta</div>
</div>
<div class="t" style="left:1304.3px;top:1081.1px;font-size:26px;color:#000;transform:scaleX(1.0150);">5000000</div>
<div class="t" style="left:1469.6px;top:1081.1px;font-size:26px;color:#000;transform:scaleX(1.0150);">87000</div>
<div class="t" style="left:1605.6px;top:1081.1px;font-size:26px;color:#000;transform:scaleX(1.0150);">15000</div>
<div class="t" style="left:1726.9px;top:1081.1px;font-size:26px;color:#000;transform:scaleX(1.0150);">100000</div>
<div class="t" style="left:1862.9px;top:1081.1px;font-size:26px;color:#000;transform:scaleX(1.0150);">185001</div>
<div class="t" style="left:2013.6px;top:1081.1px;font-size:26px;color:#000;transform:scaleX(1.0150);">50000</div>
<div class="t" style="left:2134.9px;top:1081.1px;font-size:26px;color:#000;transform:scaleX(1.0150);">100000</div>
<div class="t" style="left:2256.3px;top:1081.1px;font-size:26px;color:#000;transform:scaleX(1.0150);">5537001</div>
<div class="t" style="left:153.6px;top:1119.1px;font-size:26px;color:#000;transform:scaleX(1.0150);">16</div>
<div class="r" style="left:190px;top:1113px;width:135px;height:38px;overflow:hidden">
<div class="t" style="left:4.5px;top:6.1px;font-size:26px;color:#000;transform:scaleX(0.9029);">TAKBIROTUL</div>
</div>
<div class="r" style="left:326px;top:1113px;width:135px;height:38px;overflow:hidden">
<div class="t" style="left:4.5px;top:6.1px;font-size:26px;color:#000;">MRD00016</div>
</div>
<div class="t" style="left:467.0px;top:1119.1px;font-size:26px;color:#000;">TK/0</div>
<div class="t" style="left:1011.0px;top:1119.1px;font-size:26px;color:#000;transform:scaleX(0.8803);">ALL</div>
<div class="r" style="left:1142px;top:1113px;width:135px;height:38px;overflow:hidden">
<div class="t" style="left:4.5px;top:6.1px;font-size:26px;color:#000;transform:scaleX(0.9608);">KPP Madya Jakarta</div>
</div>
<div class="t" style="left:1304.3px;top:1119.1px;font-size:26px;color:#000;transform:scaleX(1.0150);">5000000</div>
<div class="t" style="left:2256.3px;top:1119.1px;font-size:26px;color:#000;transform:scaleX(1.0150);">5000000</div>
<div class="t" style="left:153.6px;top:1157.1px;font-size:26px;color:#000;transform:scaleX(1.0150);">17</div>
<div class="r" style="left:190px;top:1151px;width:135px;height:38px;overflow:hidden">
<div class="t" style="left:4.5px;top:6.1px;font-size:26px;color:#000;transform:scaleX(0.9288);">ALPIAN NUR</div>
</div>
<div class="r" style="left:326px;top:1151px;width:135px;height:38px;overflow:hidden">
<div class="t" style="left:4.5px;top:6.1px;font-size:26px;color:#000;">MRD00017</div>
</div>
<div class="t" style="left:467.0px;top:1157.1px;font-size:26px;color:#000;">TK/0</div>
<div class="t" style="left:1011.0px;top:1157.1px;font-size:26px;color:#000;transform:scaleX(0.8803);">ALL</div>
<div class="r" style="left:1142px;top:1151px;width:135px;height:38px;overflow:hidden">
<div class="t" style="left:4.5px;top:6.1px;font-size:26px;color:#000;transform:scaleX(0.9608);">KPP Madya Jakarta</div>
</div>
<div class="t" style="left:1304.3px;top:1157.1px;font-size:26px;color:#000;transform:scaleX(1.0150);">5000000</div>
<div class="t" style="left:1469.6px;top:1157.1px;font-size:26px;color:#000;transform:scaleX(1.0150);">87000</div>
<div class="t" style="left:1605.6px;top:1157.1px;font-size:26px;color:#000;transform:scaleX(1.0150);">15000</div>
<div class="t" style="left:1726.9px;top:1157.1px;font-size:26px;color:#000;transform:scaleX(1.0150);">100000</div>
<div class="t" style="left:1862.9px;top:1157.1px;font-size:26px;color:#000;transform:scaleX(1.0150);">185001</div>
<div class="t" style="left:2013.6px;top:1157.1px;font-size:26px;color:#000;transform:scaleX(1.0150);">50000</div>
<div class="t" style="left:2134.9px;top:1157.1px;font-size:26px;color:#000;transform:scaleX(1.0150);">100000</div>
<div class="t" style="left:2256.3px;top:1157.1px;font-size:26px;color:#000;transform:scaleX(1.0150);">5537001</div>
<div class="t" style="left:153.6px;top:1195.1px;font-size:26px;color:#000;transform:scaleX(1.0150);">18</div>
<div class="r" style="left:190px;top:1189px;width:135px;height:38px;overflow:hidden">
<div class="t" style="left:4.5px;top:6.1px;font-size:26px;color:#000;transform:scaleX(0.9251);">ANISA</div>
</div>
<div class="r" style="left:326px;top:1189px;width:135px;height:38px;overflow:hidden">
<div class="t" style="left:4.5px;top:6.1px;font-size:26px;color:#000;">MRD00018</div>
</div>
<div class="t" style="left:467.0px;top:1195.1px;font-size:26px;color:#000;">TK/0</div>
<div class="t" style="left:1011.0px;top:1195.1px;font-size:26px;color:#000;transform:scaleX(0.8803);">ALL</div>
<div class="r" style="left:1142px;top:1189px;width:135px;height:38px;overflow:hidden">
<div class="t" style="left:4.5px;top:6.1px;font-size:26px;color:#000;transform:scaleX(0.9608);">KPP Madya Jakarta</div>
</div>
<div class="t" style="left:1304.3px;top:1195.1px;font-size:26px;color:#000;transform:scaleX(1.0150);">5000000</div>
<div class="t" style="left:1469.6px;top:1195.1px;font-size:26px;color:#000;transform:scaleX(1.0150);">87000</div>
<div class="t" style="left:1605.6px;top:1195.1px;font-size:26px;color:#000;transform:scaleX(1.0150);">15000</div>
<div class="t" style="left:1726.9px;top:1195.1px;font-size:26px;color:#000;transform:scaleX(1.0150);">100000</div>
<div class="t" style="left:1862.9px;top:1195.1px;font-size:26px;color:#000;transform:scaleX(1.0150);">185001</div>
<div class="t" style="left:2013.6px;top:1195.1px;font-size:26px;color:#000;transform:scaleX(1.0150);">50000</div>
<div class="t" style="left:2134.9px;top:1195.1px;font-size:26px;color:#000;transform:scaleX(1.0150);">100000</div>
<div class="t" style="left:2256.3px;top:1195.1px;font-size:26px;color:#000;transform:scaleX(1.0150);">5537001</div>
<div class="t" style="left:153.6px;top:1233.1px;font-size:26px;color:#000;transform:scaleX(1.0150);">19</div>
<div class="r" style="left:190px;top:1227px;width:135px;height:38px;overflow:hidden">
<div class="t" style="left:4.5px;top:6.1px;font-size:26px;color:#000;transform:scaleX(0.9397);">HAFID HELMI</div>
</div>
<div class="r" style="left:326px;top:1227px;width:135px;height:38px;overflow:hidden">
<div class="t" style="left:4.5px;top:6.1px;font-size:26px;color:#000;">MRD00019</div>
</div>
<div class="t" style="left:467.0px;top:1233.1px;font-size:26px;color:#000;">TK/0</div>
<div class="t" style="left:1011.0px;top:1233.1px;font-size:26px;color:#000;transform:scaleX(0.8803);">ALL</div>
<div class="r" style="left:1142px;top:1227px;width:135px;height:38px;overflow:hidden">
<div class="t" style="left:4.5px;top:6.1px;font-size:26px;color:#000;transform:scaleX(0.9608);">KPP Madya Jakarta</div>
</div>
<div class="t" style="left:1304.3px;top:1233.1px;font-size:26px;color:#000;transform:scaleX(1.0150);">5000000</div>
<div class="t" style="left:1469.6px;top:1233.1px;font-size:26px;color:#000;transform:scaleX(1.0150);">87000</div>
<div class="t" style="left:1605.6px;top:1233.1px;font-size:26px;color:#000;transform:scaleX(1.0150);">15000</div>
<div class="t" style="left:1726.9px;top:1233.1px;font-size:26px;color:#000;transform:scaleX(1.0150);">100000</div>
<div class="t" style="left:1862.9px;top:1233.1px;font-size:26px;color:#000;transform:scaleX(1.0150);">185001</div>
<div class="t" style="left:2013.6px;top:1233.1px;font-size:26px;color:#000;transform:scaleX(1.0150);">50000</div>
<div class="t" style="left:2134.9px;top:1233.1px;font-size:26px;color:#000;transform:scaleX(1.0150);">100000</div>
<div class="t" style="left:2256.3px;top:1233.1px;font-size:26px;color:#000;transform:scaleX(1.0150);">5537001</div>
<div class="t" style="left:153.6px;top:1271.1px;font-size:26px;color:#000;transform:scaleX(1.0150);">20</div>
<div class="r" style="left:190px;top:1265px;width:135px;height:38px;overflow:hidden">
<div class="t" style="left:4.5px;top:6.1px;font-size:26px;color:#000;transform:scaleX(0.9449);">M. FADILLAH</div>
</div>
<div class="r" style="left:326px;top:1265px;width:135px;height:38px;overflow:hidden">
<div class="t" style="left:4.5px;top:6.1px;font-size:26px;color:#000;">MRD00020</div>
</div>
<div class="t" style="left:467.0px;top:1271.1px;font-size:26px;color:#000;">TK/0</div>
<div class="t" style="left:1011.0px;top:1271.1px;font-size:26px;color:#000;transform:scaleX(0.8803);">ALL</div>
<div class="r" style="left:1142px;top:1265px;width:135px;height:38px;overflow:hidden">
<div class="t" style="left:4.5px;top:6.1px;font-size:26px;color:#000;transform:scaleX(0.9608);">KPP Madya Jakarta</div>
</div>
<div class="t" style="left:1304.3px;top:1271.1px;font-size:26px;color:#000;transform:scaleX(1.0150);">5000000</div>
<div class="t" style="left:2256.3px;top:1271.1px;font-size:26px;color:#000;transform:scaleX(1.0150);">5000000</div>
<div class="t" style="left:153.6px;top:1309.1px;font-size:26px;color:#000;transform:scaleX(1.0150);">21</div>
<div class="r" style="left:190px;top:1303px;width:135px;height:38px;overflow:hidden">
<div class="t" style="left:4.5px;top:6.1px;font-size:26px;color:#000;transform:scaleX(0.9498);">MURSANI A</div>
</div>
<div class="r" style="left:326px;top:1303px;width:135px;height:38px;overflow:hidden">
<div class="t" style="left:4.5px;top:6.1px;font-size:26px;color:#000;">MRD00021</div>
</div>
<div class="t" style="left:467.0px;top:1309.1px;font-size:26px;color:#000;">TK/0</div>
<div class="t" style="left:1011.0px;top:1309.1px;font-size:26px;color:#000;transform:scaleX(0.8803);">ALL</div>
<div class="r" style="left:1142px;top:1303px;width:135px;height:38px;overflow:hidden">
<div class="t" style="left:4.5px;top:6.1px;font-size:26px;color:#000;transform:scaleX(0.9608);">KPP Madya Jakarta</div>
</div>
<div class="t" style="left:1304.3px;top:1309.1px;font-size:26px;color:#000;transform:scaleX(1.0150);">5000000</div>
<div class="t" style="left:2256.3px;top:1309.1px;font-size:26px;color:#000;transform:scaleX(1.0150);">5000000</div>
<div class="t" style="left:153.6px;top:1347.1px;font-size:26px;color:#000;transform:scaleX(1.0150);">22</div>
<div class="r" style="left:190px;top:1341px;width:135px;height:38px;overflow:hidden">
<div class="t" style="left:4.5px;top:6.1px;font-size:26px;color:#000;transform:scaleX(0.9691);">MURDIONO</div>
</div>
<div class="r" style="left:326px;top:1341px;width:135px;height:38px;overflow:hidden">
<div class="t" style="left:4.5px;top:6.1px;font-size:26px;color:#000;">MRD00022</div>
</div>
<div class="t" style="left:467.0px;top:1347.1px;font-size:26px;color:#000;">TK/0</div>
<div class="t" style="left:1011.0px;top:1347.1px;font-size:26px;color:#000;transform:scaleX(0.8803);">ALL</div>
<div class="r" style="left:1142px;top:1341px;width:135px;height:38px;overflow:hidden">
<div class="t" style="left:4.5px;top:6.1px;font-size:26px;color:#000;transform:scaleX(0.9608);">KPP Madya Jakarta</div>
</div>
<div class="t" style="left:1304.3px;top:1347.1px;font-size:26px;color:#000;transform:scaleX(1.0150);">5000000</div>
<div class="t" style="left:1469.6px;top:1347.1px;font-size:26px;color:#000;transform:scaleX(1.0150);">87000</div>
<div class="t" style="left:1605.6px;top:1347.1px;font-size:26px;color:#000;transform:scaleX(1.0150);">15000</div>
<div class="t" style="left:1726.9px;top:1347.1px;font-size:26px;color:#000;transform:scaleX(1.0150);">100000</div>
<div class="t" style="left:1862.9px;top:1347.1px;font-size:26px;color:#000;transform:scaleX(1.0150);">185001</div>
<div class="t" style="left:2013.6px;top:1347.1px;font-size:26px;color:#000;transform:scaleX(1.0150);">50000</div>
<div class="t" style="left:2134.9px;top:1347.1px;font-size:26px;color:#000;transform:scaleX(1.0150);">100000</div>
<div class="t" style="left:2256.3px;top:1347.1px;font-size:26px;color:#000;transform:scaleX(1.0150);">5537001</div>
<div class="t" style="left:153.6px;top:1385.1px;font-size:26px;color:#000;transform:scaleX(1.0150);">23</div>
<div class="r" style="left:190px;top:1379px;width:135px;height:38px;overflow:hidden">
<div class="t" style="left:4.5px;top:6.1px;font-size:26px;color:#000;transform:scaleX(0.9768);">MARIA MAGDA</div>
</div>
<div class="r" style="left:326px;top:1379px;width:135px;height:38px;overflow:hidden">
<div class="t" style="left:4.5px;top:6.1px;font-size:26px;color:#000;">MRD00023</div>
</div>
<div class="t" style="left:467.0px;top:1385.1px;font-size:26px;color:#000;">TK/0</div>
<div class="t" style="left:1011.0px;top:1385.1px;font-size:26px;color:#000;transform:scaleX(0.8803);">ALL</div>
<div class="r" style="left:1142px;top:1379px;width:135px;height:38px;overflow:hidden">
<div class="t" style="left:4.5px;top:6.1px;font-size:26px;color:#000;transform:scaleX(0.9608);">KPP Madya Jakarta</div>
</div>
<div class="t" style="left:1304.3px;top:1385.1px;font-size:26px;color:#000;transform:scaleX(1.0150);">5000000</div>
<div class="t" style="left:1469.6px;top:1385.1px;font-size:26px;color:#000;transform:scaleX(1.0150);">87000</div>
<div class="t" style="left:1605.6px;top:1385.1px;font-size:26px;color:#000;transform:scaleX(1.0150);">15000</div>
<div class="t" style="left:1726.9px;top:1385.1px;font-size:26px;color:#000;transform:scaleX(1.0150);">100000</div>
<div class="t" style="left:1862.9px;top:1385.1px;font-size:26px;color:#000;transform:scaleX(1.0150);">185001</div>
<div class="t" style="left:2013.6px;top:1385.1px;font-size:26px;color:#000;transform:scaleX(1.0150);">50000</div>
<div class="t" style="left:2134.9px;top:1385.1px;font-size:26px;color:#000;transform:scaleX(1.0150);">100000</div>
<div class="t" style="left:2256.3px;top:1385.1px;font-size:26px;color:#000;transform:scaleX(1.0150);">5537001</div>
<div class="t" style="left:153.6px;top:1423.1px;font-size:26px;color:#000;transform:scaleX(1.0150);">24</div>
<div class="r" style="left:190px;top:1417px;width:135px;height:38px;overflow:hidden">
<div class="t" style="left:4.5px;top:6.1px;font-size:26px;color:#000;transform:scaleX(0.8985);">AGUS SUTISNA</div>
</div>
<div class="r" style="left:326px;top:1417px;width:135px;height:38px;overflow:hidden">
<div class="t" style="left:4.5px;top:6.1px;font-size:26px;color:#000;">MRD00024</div>
</div>
<div class="t" style="left:467.0px;top:1423.1px;font-size:26px;color:#000;">TK/0</div>
<div class="t" style="left:1011.0px;top:1423.1px;font-size:26px;color:#000;transform:scaleX(0.8803);">ALL</div>
<div class="r" style="left:1142px;top:1417px;width:135px;height:38px;overflow:hidden">
<div class="t" style="left:4.5px;top:6.1px;font-size:26px;color:#000;transform:scaleX(0.9608);">KPP Madya Jakarta</div>
</div>
<div class="t" style="left:1304.3px;top:1423.1px;font-size:26px;color:#000;transform:scaleX(1.0150);">5000000</div>
<div class="t" style="left:2256.3px;top:1423.1px;font-size:26px;color:#000;transform:scaleX(1.0150);">5000000</div>
<div class="t" style="left:153.6px;top:1461.1px;font-size:26px;color:#000;transform:scaleX(1.0150);">25</div>
<div class="r" style="left:190px;top:1455px;width:135px;height:38px;overflow:hidden">
<div class="t" style="left:4.5px;top:6.1px;font-size:26px;color:#000;transform:scaleX(0.9079);">HERLINA AYU</div>
</div>
<div class="r" style="left:326px;top:1455px;width:135px;height:38px;overflow:hidden">
<div class="t" style="left:4.5px;top:6.1px;font-size:26px;color:#000;">MRD00025</div>
</div>
<div class="t" style="left:467.0px;top:1461.1px;font-size:26px;color:#000;">TK/0</div>
<div class="t" style="left:1011.0px;top:1461.1px;font-size:26px;color:#000;transform:scaleX(0.8803);">ALL</div>
<div class="r" style="left:1142px;top:1455px;width:135px;height:38px;overflow:hidden">
<div class="t" style="left:4.5px;top:6.1px;font-size:26px;color:#000;transform:scaleX(0.9608);">KPP Madya Jakarta</div>
</div>
<div class="t" style="left:1304.3px;top:1461.1px;font-size:26px;color:#000;transform:scaleX(1.0150);">5000000</div>
<div class="t" style="left:1469.6px;top:1461.1px;font-size:26px;color:#000;transform:scaleX(1.0150);">87000</div>
<div class="t" style="left:1605.6px;top:1461.1px;font-size:26px;color:#000;transform:scaleX(1.0150);">15000</div>
<div class="t" style="left:1726.9px;top:1461.1px;font-size:26px;color:#000;transform:scaleX(1.0150);">100000</div>
<div class="t" style="left:1862.9px;top:1461.1px;font-size:26px;color:#000;transform:scaleX(1.0150);">185001</div>
<div class="t" style="left:2013.6px;top:1461.1px;font-size:26px;color:#000;transform:scaleX(1.0150);">50000</div>
<div class="t" style="left:2134.9px;top:1461.1px;font-size:26px;color:#000;transform:scaleX(1.0150);">100000</div>
<div class="t" style="left:2256.3px;top:1461.1px;font-size:26px;color:#000;transform:scaleX(1.0150);">5537001</div>
<div class="t" style="left:153.6px;top:1499.1px;font-size:26px;color:#000;transform:scaleX(1.0150);">26</div>
<div class="r" style="left:190px;top:1493px;width:135px;height:38px;overflow:hidden">
<div class="t" style="left:4.5px;top:6.1px;font-size:26px;color:#000;transform:scaleX(0.9192);">HARIYANTO</div>
</div>
<div class="r" style="left:326px;top:1493px;width:135px;height:38px;overflow:hidden">
<div class="t" style="left:4.5px;top:6.1px;font-size:26px;color:#000;">MRD00026</div>
</div>
<div class="t" style="left:467.0px;top:1499.1px;font-size:26px;color:#000;">TK/0</div>
<div class="t" style="left:1011.0px;top:1499.1px;font-size:26px;color:#000;transform:scaleX(0.8803);">ALL</div>
<div class="r" style="left:1142px;top:1493px;width:135px;height:38px;overflow:hidden">
<div class="t" style="left:4.5px;top:6.1px;font-size:26px;color:#000;transform:scaleX(0.9608);">KPP Madya Jakarta</div>
</div>
<div class="t" style="left:1304.3px;top:1499.1px;font-size:26px;color:#000;transform:scaleX(1.0150);">5000000</div>
<div class="t" style="left:1469.6px;top:1499.1px;font-size:26px;color:#000;transform:scaleX(1.0150);">87000</div>
<div class="t" style="left:1605.6px;top:1499.1px;font-size:26px;color:#000;transform:scaleX(1.0150);">15000</div>
<div class="t" style="left:1726.9px;top:1499.1px;font-size:26px;color:#000;transform:scaleX(1.0150);">100000</div>
<div class="t" style="left:1862.9px;top:1499.1px;font-size:26px;color:#000;transform:scaleX(1.0150);">185001</div>
<div class="t" style="left:2013.6px;top:1499.1px;font-size:26px;color:#000;transform:scaleX(1.0150);">50000</div>
<div class="t" style="left:2134.9px;top:1499.1px;font-size:26px;color:#000;transform:scaleX(1.0150);">100000</div>
<div class="t" style="left:2256.3px;top:1499.1px;font-size:26px;color:#000;transform:scaleX(1.0150);">5537001</div>
<div class="t" style="left:153.6px;top:1537.1px;font-size:26px;color:#000;transform:scaleX(1.0150);">27</div>
<div class="r" style="left:190px;top:1531px;width:135px;height:38px;overflow:hidden">
<div class="t" style="left:4.5px;top:6.1px;font-size:26px;color:#000;transform:scaleX(0.8980);">HENG HERI</div>
</div>
<div class="r" style="left:326px;top:1531px;width:135px;height:38px;overflow:hidden">
<div class="t" style="left:4.5px;top:6.1px;font-size:26px;color:#000;">MRD00027</div>
</div>
<div class="t" style="left:467.0px;top:1537.1px;font-size:26px;color:#000;">TK/0</div>
<div class="t" style="left:1011.0px;top:1537.1px;font-size:26px;color:#000;transform:scaleX(0.8803);">ALL</div>
<div class="r" style="left:1142px;top:1531px;width:135px;height:38px;overflow:hidden">
<div class="t" style="left:4.5px;top:6.1px;font-size:26px;color:#000;transform:scaleX(0.9608);">KPP Madya Jakarta</div>
</div>
<div class="t" style="left:1304.3px;top:1537.1px;font-size:26px;color:#000;transform:scaleX(1.0150);">5000000</div>
<div class="t" style="left:2256.3px;top:1537.1px;font-size:26px;color:#000;transform:scaleX(1.0150);">5000000</div>
<div class="t" style="left:153.6px;top:1575.1px;font-size:26px;color:#000;transform:scaleX(1.0150);">28</div>
<div class="r" style="left:190px;top:1569px;width:135px;height:38px;overflow:hidden">
<div class="t" style="left:4.5px;top:6.1px;font-size:26px;color:#000;transform:scaleX(0.8965);">CIENDRA LO</div>
</div>
<div class="r" style="left:326px;top:1569px;width:135px;height:38px;overflow:hidden">
<div class="t" style="left:4.5px;top:6.1px;font-size:26px;color:#000;">MRD00028</div>
</div>
<div class="t" style="left:467.0px;top:1575.1px;font-size:26px;color:#000;">TK/0</div>
<div class="t" style="left:1011.0px;top:1575.1px;font-size:26px;color:#000;transform:scaleX(0.8803);">ALL</div>
<div class="r" style="left:1142px;top:1569px;width:135px;height:38px;overflow:hidden">
<div class="t" style="left:4.5px;top:6.1px;font-size:26px;color:#000;transform:scaleX(0.9608);">KPP Madya Jakarta</div>
</div>
<div class="t" style="left:1304.3px;top:1575.1px;font-size:26px;color:#000;transform:scaleX(1.0150);">5000000</div>
<div class="t" style="left:1469.6px;top:1575.1px;font-size:26px;color:#000;transform:scaleX(1.0150);">87000</div>
<div class="t" style="left:1605.6px;top:1575.1px;font-size:26px;color:#000;transform:scaleX(1.0150);">15000</div>
<div class="t" style="left:1726.9px;top:1575.1px;font-size:26px;color:#000;transform:scaleX(1.0150);">100000</div>
<div class="t" style="left:1862.9px;top:1575.1px;font-size:26px;color:#000;transform:scaleX(1.0150);">185001</div>
<div class="t" style="left:2013.6px;top:1575.1px;font-size:26px;color:#000;transform:scaleX(1.0150);">50000</div>
<div class="t" style="left:2134.9px;top:1575.1px;font-size:26px;color:#000;transform:scaleX(1.0150);">100000</div>
<div class="t" style="left:2256.3px;top:1575.1px;font-size:26px;color:#000;transform:scaleX(1.0150);">5537001</div>
<div class="t" style="left:153.6px;top:1613.1px;font-size:26px;color:#000;transform:scaleX(1.0150);">29</div>
<div class="r" style="left:190px;top:1607px;width:135px;height:38px;overflow:hidden">
<div class="t" style="left:4.5px;top:6.1px;font-size:26px;color:#000;transform:scaleX(0.9209);">RINDI YULIA</div>
</div>
<div class="r" style="left:326px;top:1607px;width:135px;height:38px;overflow:hidden">
<div class="t" style="left:4.5px;top:6.1px;font-size:26px;color:#000;">MRD00029</div>
</div>
<div class="t" style="left:467.0px;top:1613.1px;font-size:26px;color:#000;">TK/0</div>
<div class="t" style="left:1011.0px;top:1613.1px;font-size:26px;color:#000;transform:scaleX(0.8803);">ALL</div>
<div class="r" style="left:1142px;top:1607px;width:135px;height:38px;overflow:hidden">
<div class="t" style="left:4.5px;top:6.1px;font-size:26px;color:#000;transform:scaleX(0.9608);">KPP Madya Jakarta</div>
</div>
<div class="t" style="left:1304.3px;top:1613.1px;font-size:26px;color:#000;transform:scaleX(1.0150);">5000000</div>
<div class="t" style="left:2256.3px;top:1613.1px;font-size:26px;color:#000;transform:scaleX(1.0150);">5000000</div>
<div class="t" style="left:153.6px;top:1651.1px;font-size:26px;color:#000;transform:scaleX(1.0150);">30</div>
<div class="r" style="left:190px;top:1645px;width:135px;height:38px;overflow:hidden">
<div class="t" style="left:4.5px;top:6.1px;font-size:26px;color:#000;transform:scaleX(0.9400);">BAMBANG S</div>
</div>
<div class="r" style="left:326px;top:1645px;width:135px;height:38px;overflow:hidden">
<div class="t" style="left:4.5px;top:6.1px;font-size:26px;color:#000;">MRD00030</div>
</div>
<div class="t" style="left:467.0px;top:1651.1px;font-size:26px;color:#000;">TK/0</div>
<div class="t" style="left:1011.0px;top:1651.1px;font-size:26px;color:#000;transform:scaleX(0.8803);">ALL</div>
<div class="r" style="left:1142px;top:1645px;width:135px;height:38px;overflow:hidden">
<div class="t" style="left:4.5px;top:6.1px;font-size:26px;color:#000;transform:scaleX(0.9608);">KPP Madya Jakarta</div>
</div>
<div class="t" style="left:1304.3px;top:1651.1px;font-size:26px;color:#000;transform:scaleX(1.0150);">5000000</div>
<div class="t" style="left:2256.3px;top:1651.1px;font-size:26px;color:#000;transform:scaleX(1.0150);">5000000</div>
<div class="t" style="left:603.0px;top:549.1px;font-size:26px;color:#000;transform:scaleX(0.9428);">NAHKODA</div>
<div class="t" style="left:603.0px;top:967.1px;font-size:26px;color:#000;transform:scaleX(0.8516);">STAFF</div>
<div class="r" style="left:734px;top:961px;width:135px;height:38px;overflow:hidden">
<div class="t" style="left:4.5px;top:6.1px;font-size:26px;color:#000;">Operasional</div>
</div>
<div class="t" style="left:875.0px;top:967.1px;font-size:26px;color:#000;transform:scaleX(1.0211);">Permanent</div>
<div class="r" style="left:51px;top:465px;width:141px;height:81px;border:3px solid #107c41"></div>
<div class="r" style="left:184px;top:538px;width:10px;height:10px;background:#fff"></div>
<div class="r" style="left:185px;top:539px;width:8px;height:8px;background:#107c41"></div>
<div class="r" style="left:2841px;top:430px;width:39px;height:1261px;background:#f0f0f0"></div>
<div class="r" style="left:2844px;top:430px;width:36px;height:1261px;background:#f5f5f5;border-radius:18px"></div>
<svg class="r" style="left:2851px;top:440px;" width="20" height="14" viewBox="0 0 20 14" fill="none"><path d="M10 1.5L18.5 12.5H1.5Z" fill="#6e6e6e" stroke="#6e6e6e" stroke-width="2" stroke-linejoin="round"/></svg>
<div class="r" style="left:2853px;top:464px;width:16px;height:390px;background:#6e6e6e;border-radius:8px"></div>
<svg class="r" style="left:2851px;top:1670px;" width="20" height="14" viewBox="0 0 20 14" fill="none"><path d="M10 12.5L18.5 1.5H1.5Z" fill="#6e6e6e" stroke="#6e6e6e" stroke-width="2" stroke-linejoin="round"/></svg>
<div class="r" style="left:0px;top:1691px;width:2880px;height:65px;background:#f0f0f0"></div>
<svg class="r" style="left:40px;top:1711px;" width="16" height="21" viewBox="0 0 16 21" fill="none"><path d="M13 1.5L3 10L13 18.5" stroke="#a0a0a0" stroke-width="2"/></svg>
<svg class="r" style="left:105px;top:1711px;" width="16" height="21" viewBox="0 0 16 21" fill="none"><path d="M3 1.5L13 10L3 18.5" stroke="#a0a0a0" stroke-width="2"/></svg>
<div class="r" style="left:203px;top:1691px;width:195px;height:13px;background:#fff"></div>
<div class="r" style="left:190px;top:1691px;width:26px;height:26px;background:#f0f0f0;border-radius:50%"></div>
<div class="r" style="left:385px;top:1691px;width:26px;height:26px;background:#f0f0f0;border-radius:50%"></div>
<div class="r" style="left:215px;top:1691px;width:171px;height:57px;background:#fff;border-radius:0 0 13px 13px;box-shadow:0 0.5px 1.5px rgba(0,0,0,0.18)"></div>
<div class="r" style="left:215px;top:1691px;width:171px;height:20px;background:#fff"></div>
<div class="t" style="left:232.0px;top:1703.1px;font-size:27px;color:#1f1f1f;font-weight:700;transform:scaleX(0.9925);">Worksheet</div>
<div class="r" style="left:232px;top:1737px;width:137px;height:4px;background:#107c41"></div>
<div class="r" style="left:393px;top:1706px;width:2px;height:35px;background:#c8c8c8"></div>
<svg class="r" style="left:478px;top:1709px;" width="24" height="24" viewBox="0 0 24 24" fill="none"><path d="M12 1V23M1 12H23" stroke="#333" stroke-width="2.2"/></svg>
<div class="r" style="left:1735px;top:1714.5px;width:5px;height:5px;background:#333;border-radius:1px"></div>
<div class="r" style="left:1735px;top:1722.0px;width:5px;height:5px;background:#333;border-radius:1px"></div>
<div class="r" style="left:1735px;top:1729.5px;width:5px;height:5px;background:#333;border-radius:1px"></div>
<div class="r" style="left:1769px;top:1706px;width:1075px;height:34px;background:#f9f9f9;border-radius:17px"></div>
<svg class="r" style="left:1777px;top:1712px;" width="16" height="20" viewBox="0 0 16 20" fill="none"><path d="M2.5 10L13.5 2V18Z" fill="#6e6e6e" stroke="#6e6e6e" stroke-width="2" stroke-linejoin="round"/></svg>
<div class="r" style="left:1803px;top:1714px;width:956px;height:16px;background:#6e6e6e;border-radius:8px"></div>
<svg class="r" style="left:2819px;top:1712px;" width="16" height="20" viewBox="0 0 16 20" fill="none"><path d="M13.5 10L2.5 2V18Z" fill="#6e6e6e" stroke="#6e6e6e" stroke-width="2" stroke-linejoin="round"/></svg>
<div class="r" style="left:0px;top:1755px;width:2880px;height:34px;background:#f4f4f4;border-top:2px solid #c8c8c8"></div>
<div class="t" style="left:15.0px;top:1765.7px;font-size:22px;color:#242424;transform:scaleX(0.8491);">Ready</div>
<div class="t" style="left:100.0px;top:1765.7px;font-size:22px;color:#242424;transform:scaleX(0.9268);">Calculate</div>
<svg class="r" style="left:221px;top:1762px;" width="32" height="30" viewBox="0 0 32 30" fill="none"><circle cx="13.8" cy="6.5" r="3.3" stroke="#242424" stroke-width="2"/>
<path d="M3 9.5C4 13 8 13 11 12.5C13 15 12 21 10 27M24.5 9C24 12 20 12.5 17 12.5C16 17 15 20 13 24C11 26 10 27 9 30" stroke="#242424" stroke-width="2"/>
<path d="M18 22L28.5 31M28.5 21L18 31" stroke="#242424" stroke-width="2"/></svg>
<div class="t" style="left:259.0px;top:1765.7px;font-size:22px;color:#242424;transform:scaleX(0.9311);">Accessibility: Investigate</div>
<div class="r" style="left:2286px;top:1756px;width:80px;height:33px;background:#dcdcdc"></div>
<svg class="r" style="left:2311px;top:1763px;" width="28" height="28" viewBox="0 0 28 28" fill="none"><rect x="1" y="1" width="26" height="30" stroke="#333" stroke-width="2"/><path d="M1 9H27M1 17H27M1 25H27M9.7 1V31M18.3 1V31" stroke="#333" stroke-width="2"/></svg>
<svg class="r" style="left:2391px;top:1763px;" width="30" height="28" viewBox="0 0 30 28" fill="none"><rect x="1" y="1" width="28" height="30" stroke="#333" stroke-width="2"/><rect x="6" y="6" width="18" height="30" stroke="#333" stroke-width="2"/><path d="M10 12H20M10 17H20M10 22H20" stroke="#333" stroke-width="2"/></svg>
<svg class="r" style="left:2471px;top:1763px;" width="30" height="28" viewBox="0 0 30 28" fill="none"><rect x="1" y="1" width="28" height="30" stroke="#333" stroke-width="2"/><path d="M1 14H15V1M8 1V14" stroke="#333" stroke-width="2"/></svg>
<div class="r" style="left:2538px;top:1777px;width:15px;height:1.5px;background:#555"></div>
<div class="r" style="left:2565px;top:1777px;width:198px;height:1.5px;background:#6b6b6b"></div>
<div class="r" style="left:2660px;top:1767px;width:9px;height:22px;background:#6b6b6b;border-radius:1px"></div>
<svg class="r" style="left:2773px;top:1769px;" width="18" height="18" viewBox="0 0 18 18" fill="none"><path d="M9 1V17M1 9H17" stroke="#555" stroke-width="1.6"/></svg>
<div class="t" style="left:2816.0px;top:1765.7px;font-size:22px;color:#242424;transform:scaleX(0.8531);">100%</div>
</body></html>
